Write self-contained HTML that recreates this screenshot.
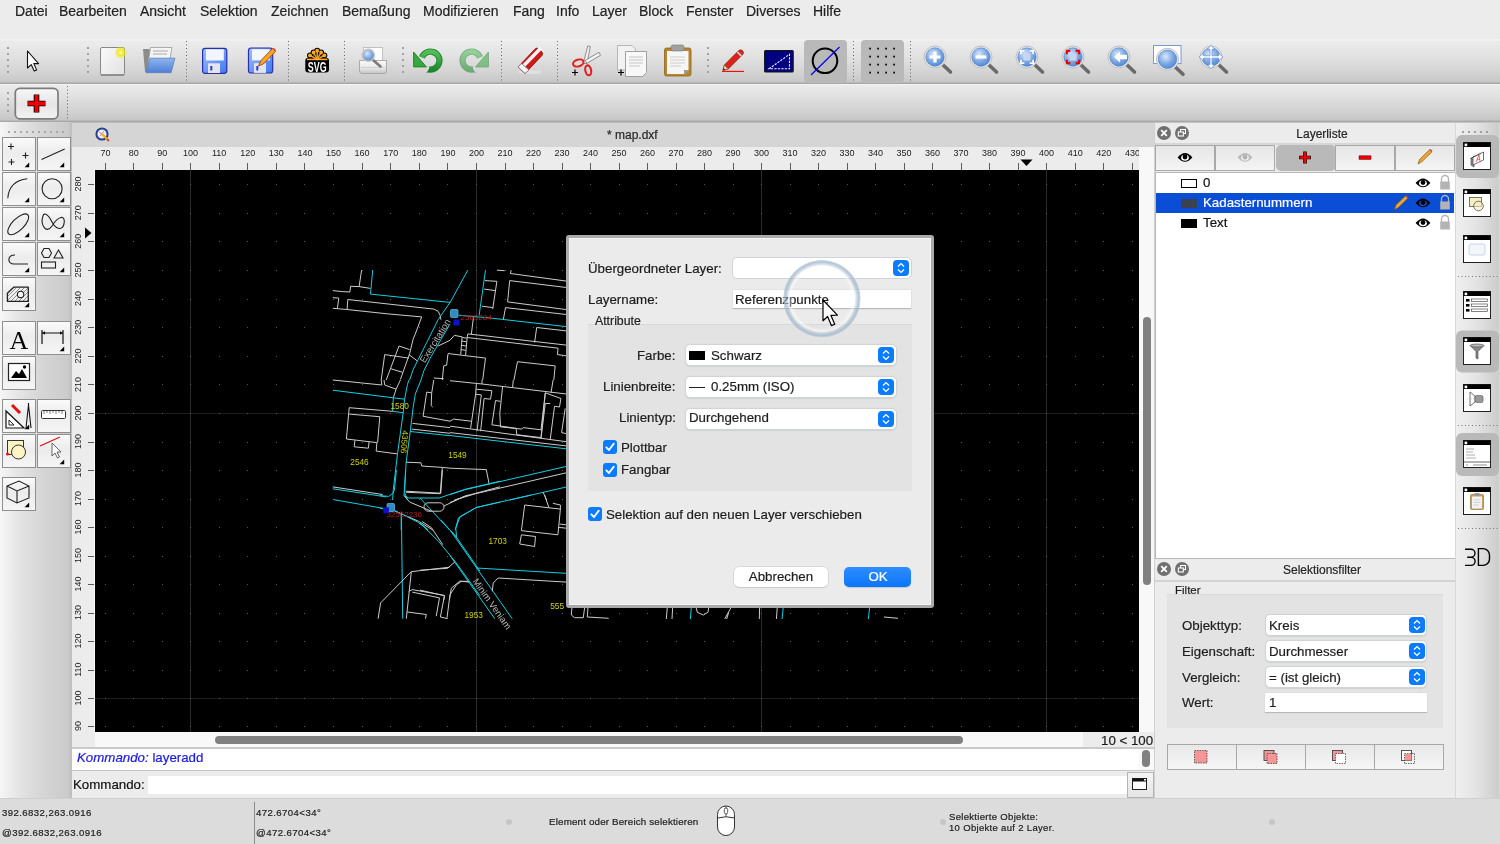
<!DOCTYPE html>
<html><head><meta charset="utf-8">
<style>
*{box-sizing:border-box;margin:0;padding:0}
html,body{width:1500px;height:844px;overflow:hidden;background:#ececec;font-family:"Liberation Sans",sans-serif;color:#1e1e1e}
.a{position:absolute}
.t{position:absolute;white-space:nowrap;line-height:1;-webkit-text-stroke:.2px currentColor}
body>*{will-change:transform}
#menu{left:0;top:0;width:1500px;height:39px;background:#ececec}
#menu .t{font-size:14px;top:4px;color:#222}
#tb1{left:0;top:39px;width:1500px;height:45px;background:linear-gradient(#f4f4f4 0,#ececec 5%,#e3e3e3 35%,#d3d3d3 75%,#c8c8c8 95%,#a9a9a9 97.8%,#a9a9a9 100%)}
#tb2{left:0;top:84px;width:1500px;height:38px;background:linear-gradient(#f4f4f4 0,#eaeaea 5%,#e0e0e0 35%,#d0d0d0 75%,#c6c6c6 95%,#a9a9a9 97.4%,#a9a9a9 100%)}
.hdl{position:absolute;width:2px;background-image:linear-gradient(#9a9a9a 50%,transparent 50%);background-size:2px 6px}
.sep{position:absolute;width:1px;background-image:linear-gradient(#555 50%,transparent 50%);background-size:1px 3px}
#pal{left:0;top:122px;width:72px;height:677px;background:linear-gradient(90deg,#f6f6f6 0,#e3e3e3 28%,#d7d7d7 55%,#cbcbcb 94%,#bdbdbd 100%)}
.tbtn{position:absolute;width:34px;height:34px;border:1px solid #9b9b9b;background:linear-gradient(#f7f7f7,#e9e9e9 50%,#f3f3f3)}
#title{left:72px;top:122px;width:1083px;height:25px;background:#d5d5d5;border-top:1px solid #bdbdbd}
#hrul{left:72px;top:147px;width:1083px;height:23px;background:#ececec}
#vrul{left:72px;top:170px;width:23px;height:562px;background:#ececec}
#canvas{left:95px;top:170px;width:1044px;height:562px;background:#000;overflow:hidden}
</style></head><body>
<div id="menu" class="a">
<span class="t" style="left:15px">Datei</span>
<span class="t" style="left:59px">Bearbeiten</span>
<span class="t" style="left:140px">Ansicht</span>
<span class="t" style="left:200px">Selektion</span>
<span class="t" style="left:271px">Zeichnen</span>
<span class="t" style="left:342px">Bemaßung</span>
<span class="t" style="left:423px">Modifizieren</span>
<span class="t" style="left:513px">Fang</span>
<span class="t" style="left:556px">Info</span>
<span class="t" style="left:592px">Layer</span>
<span class="t" style="left:639px">Block</span>
<span class="t" style="left:686px">Fenster</span>
<span class="t" style="left:746px">Diverses</span>
<span class="t" style="left:813px">Hilfe</span>
</div>
<div id="tb1" class="a"></div>
<div id="tb2" class="a"></div>
<div id="pal" class="a"></div>
<div id="title" class="a"></div>
<div id="hrul" class="a"></div>
<div id="vrul" class="a"></div>
<div id="canvas" class="a"></div>
<svg class="a" style="left:95px;top:170px" width="1044" height="562" viewBox="95 170 1044 562">
<rect x="190" y="170" width="1" height="562" fill="#2a2a2a"/>
<rect x="476" y="170" width="1" height="562" fill="#2a2a2a"/>
<rect x="761" y="170" width="1" height="562" fill="#2a2a2a"/>
<rect x="1046" y="170" width="1" height="562" fill="#2a2a2a"/>
<rect x="95" y="413" width="1044" height="1" fill="#1c1c1c"/>
<rect x="95" y="698" width="1044" height="1" fill="#1c1c1c"/>
<g fill="#5a5a5a"><rect x="105" y="184" width="1" height="1"/><rect x="105" y="213" width="1" height="1"/><rect x="105" y="241" width="1" height="1"/><rect x="105" y="270" width="1" height="1"/><rect x="105" y="299" width="1" height="1"/><rect x="105" y="327" width="1" height="1"/><rect x="105" y="356" width="1" height="1"/><rect x="105" y="384" width="1" height="1"/><rect x="105" y="413" width="1" height="1"/><rect x="105" y="442" width="1" height="1"/><rect x="105" y="470" width="1" height="1"/><rect x="105" y="499" width="1" height="1"/><rect x="105" y="527" width="1" height="1"/><rect x="105" y="556" width="1" height="1"/><rect x="105" y="584" width="1" height="1"/><rect x="105" y="613" width="1" height="1"/><rect x="105" y="641" width="1" height="1"/><rect x="105" y="670" width="1" height="1"/><rect x="105" y="698" width="1" height="1"/><rect x="105" y="726" width="1" height="1"/><rect x="133" y="184" width="1" height="1"/><rect x="133" y="213" width="1" height="1"/><rect x="133" y="241" width="1" height="1"/><rect x="133" y="270" width="1" height="1"/><rect x="133" y="299" width="1" height="1"/><rect x="133" y="327" width="1" height="1"/><rect x="133" y="356" width="1" height="1"/><rect x="133" y="384" width="1" height="1"/><rect x="133" y="413" width="1" height="1"/><rect x="133" y="442" width="1" height="1"/><rect x="133" y="470" width="1" height="1"/><rect x="133" y="499" width="1" height="1"/><rect x="133" y="527" width="1" height="1"/><rect x="133" y="556" width="1" height="1"/><rect x="133" y="584" width="1" height="1"/><rect x="133" y="613" width="1" height="1"/><rect x="133" y="641" width="1" height="1"/><rect x="133" y="670" width="1" height="1"/><rect x="133" y="698" width="1" height="1"/><rect x="133" y="726" width="1" height="1"/><rect x="162" y="184" width="1" height="1"/><rect x="162" y="213" width="1" height="1"/><rect x="162" y="241" width="1" height="1"/><rect x="162" y="270" width="1" height="1"/><rect x="162" y="299" width="1" height="1"/><rect x="162" y="327" width="1" height="1"/><rect x="162" y="356" width="1" height="1"/><rect x="162" y="384" width="1" height="1"/><rect x="162" y="413" width="1" height="1"/><rect x="162" y="442" width="1" height="1"/><rect x="162" y="470" width="1" height="1"/><rect x="162" y="499" width="1" height="1"/><rect x="162" y="527" width="1" height="1"/><rect x="162" y="556" width="1" height="1"/><rect x="162" y="584" width="1" height="1"/><rect x="162" y="613" width="1" height="1"/><rect x="162" y="641" width="1" height="1"/><rect x="162" y="670" width="1" height="1"/><rect x="162" y="698" width="1" height="1"/><rect x="162" y="726" width="1" height="1"/><rect x="190" y="184" width="1" height="1"/><rect x="190" y="213" width="1" height="1"/><rect x="190" y="241" width="1" height="1"/><rect x="190" y="270" width="1" height="1"/><rect x="190" y="299" width="1" height="1"/><rect x="190" y="327" width="1" height="1"/><rect x="190" y="356" width="1" height="1"/><rect x="190" y="384" width="1" height="1"/><rect x="190" y="413" width="1" height="1"/><rect x="190" y="442" width="1" height="1"/><rect x="190" y="470" width="1" height="1"/><rect x="190" y="499" width="1" height="1"/><rect x="190" y="527" width="1" height="1"/><rect x="190" y="556" width="1" height="1"/><rect x="190" y="584" width="1" height="1"/><rect x="190" y="613" width="1" height="1"/><rect x="190" y="641" width="1" height="1"/><rect x="190" y="670" width="1" height="1"/><rect x="190" y="698" width="1" height="1"/><rect x="190" y="726" width="1" height="1"/><rect x="219" y="184" width="1" height="1"/><rect x="219" y="213" width="1" height="1"/><rect x="219" y="241" width="1" height="1"/><rect x="219" y="270" width="1" height="1"/><rect x="219" y="299" width="1" height="1"/><rect x="219" y="327" width="1" height="1"/><rect x="219" y="356" width="1" height="1"/><rect x="219" y="384" width="1" height="1"/><rect x="219" y="413" width="1" height="1"/><rect x="219" y="442" width="1" height="1"/><rect x="219" y="470" width="1" height="1"/><rect x="219" y="499" width="1" height="1"/><rect x="219" y="527" width="1" height="1"/><rect x="219" y="556" width="1" height="1"/><rect x="219" y="584" width="1" height="1"/><rect x="219" y="613" width="1" height="1"/><rect x="219" y="641" width="1" height="1"/><rect x="219" y="670" width="1" height="1"/><rect x="219" y="698" width="1" height="1"/><rect x="219" y="726" width="1" height="1"/><rect x="247" y="184" width="1" height="1"/><rect x="247" y="213" width="1" height="1"/><rect x="247" y="241" width="1" height="1"/><rect x="247" y="270" width="1" height="1"/><rect x="247" y="299" width="1" height="1"/><rect x="247" y="327" width="1" height="1"/><rect x="247" y="356" width="1" height="1"/><rect x="247" y="384" width="1" height="1"/><rect x="247" y="413" width="1" height="1"/><rect x="247" y="442" width="1" height="1"/><rect x="247" y="470" width="1" height="1"/><rect x="247" y="499" width="1" height="1"/><rect x="247" y="527" width="1" height="1"/><rect x="247" y="556" width="1" height="1"/><rect x="247" y="584" width="1" height="1"/><rect x="247" y="613" width="1" height="1"/><rect x="247" y="641" width="1" height="1"/><rect x="247" y="670" width="1" height="1"/><rect x="247" y="698" width="1" height="1"/><rect x="247" y="726" width="1" height="1"/><rect x="276" y="184" width="1" height="1"/><rect x="276" y="213" width="1" height="1"/><rect x="276" y="241" width="1" height="1"/><rect x="276" y="270" width="1" height="1"/><rect x="276" y="299" width="1" height="1"/><rect x="276" y="327" width="1" height="1"/><rect x="276" y="356" width="1" height="1"/><rect x="276" y="384" width="1" height="1"/><rect x="276" y="413" width="1" height="1"/><rect x="276" y="442" width="1" height="1"/><rect x="276" y="470" width="1" height="1"/><rect x="276" y="499" width="1" height="1"/><rect x="276" y="527" width="1" height="1"/><rect x="276" y="556" width="1" height="1"/><rect x="276" y="584" width="1" height="1"/><rect x="276" y="613" width="1" height="1"/><rect x="276" y="641" width="1" height="1"/><rect x="276" y="670" width="1" height="1"/><rect x="276" y="698" width="1" height="1"/><rect x="276" y="726" width="1" height="1"/><rect x="304" y="184" width="1" height="1"/><rect x="304" y="213" width="1" height="1"/><rect x="304" y="241" width="1" height="1"/><rect x="304" y="270" width="1" height="1"/><rect x="304" y="299" width="1" height="1"/><rect x="304" y="327" width="1" height="1"/><rect x="304" y="356" width="1" height="1"/><rect x="304" y="384" width="1" height="1"/><rect x="304" y="413" width="1" height="1"/><rect x="304" y="442" width="1" height="1"/><rect x="304" y="470" width="1" height="1"/><rect x="304" y="499" width="1" height="1"/><rect x="304" y="527" width="1" height="1"/><rect x="304" y="556" width="1" height="1"/><rect x="304" y="584" width="1" height="1"/><rect x="304" y="613" width="1" height="1"/><rect x="304" y="641" width="1" height="1"/><rect x="304" y="670" width="1" height="1"/><rect x="304" y="698" width="1" height="1"/><rect x="304" y="726" width="1" height="1"/><rect x="333" y="184" width="1" height="1"/><rect x="333" y="213" width="1" height="1"/><rect x="333" y="241" width="1" height="1"/><rect x="333" y="270" width="1" height="1"/><rect x="333" y="299" width="1" height="1"/><rect x="333" y="327" width="1" height="1"/><rect x="333" y="356" width="1" height="1"/><rect x="333" y="384" width="1" height="1"/><rect x="333" y="413" width="1" height="1"/><rect x="333" y="442" width="1" height="1"/><rect x="333" y="470" width="1" height="1"/><rect x="333" y="499" width="1" height="1"/><rect x="333" y="527" width="1" height="1"/><rect x="333" y="556" width="1" height="1"/><rect x="333" y="584" width="1" height="1"/><rect x="333" y="613" width="1" height="1"/><rect x="333" y="641" width="1" height="1"/><rect x="333" y="670" width="1" height="1"/><rect x="333" y="698" width="1" height="1"/><rect x="333" y="726" width="1" height="1"/><rect x="362" y="184" width="1" height="1"/><rect x="362" y="213" width="1" height="1"/><rect x="362" y="241" width="1" height="1"/><rect x="362" y="270" width="1" height="1"/><rect x="362" y="299" width="1" height="1"/><rect x="362" y="327" width="1" height="1"/><rect x="362" y="356" width="1" height="1"/><rect x="362" y="384" width="1" height="1"/><rect x="362" y="413" width="1" height="1"/><rect x="362" y="442" width="1" height="1"/><rect x="362" y="470" width="1" height="1"/><rect x="362" y="499" width="1" height="1"/><rect x="362" y="527" width="1" height="1"/><rect x="362" y="556" width="1" height="1"/><rect x="362" y="584" width="1" height="1"/><rect x="362" y="613" width="1" height="1"/><rect x="362" y="641" width="1" height="1"/><rect x="362" y="670" width="1" height="1"/><rect x="362" y="698" width="1" height="1"/><rect x="362" y="726" width="1" height="1"/><rect x="390" y="184" width="1" height="1"/><rect x="390" y="213" width="1" height="1"/><rect x="390" y="241" width="1" height="1"/><rect x="390" y="270" width="1" height="1"/><rect x="390" y="299" width="1" height="1"/><rect x="390" y="327" width="1" height="1"/><rect x="390" y="356" width="1" height="1"/><rect x="390" y="384" width="1" height="1"/><rect x="390" y="413" width="1" height="1"/><rect x="390" y="442" width="1" height="1"/><rect x="390" y="470" width="1" height="1"/><rect x="390" y="499" width="1" height="1"/><rect x="390" y="527" width="1" height="1"/><rect x="390" y="556" width="1" height="1"/><rect x="390" y="584" width="1" height="1"/><rect x="390" y="613" width="1" height="1"/><rect x="390" y="641" width="1" height="1"/><rect x="390" y="670" width="1" height="1"/><rect x="390" y="698" width="1" height="1"/><rect x="390" y="726" width="1" height="1"/><rect x="419" y="184" width="1" height="1"/><rect x="419" y="213" width="1" height="1"/><rect x="419" y="241" width="1" height="1"/><rect x="419" y="270" width="1" height="1"/><rect x="419" y="299" width="1" height="1"/><rect x="419" y="327" width="1" height="1"/><rect x="419" y="356" width="1" height="1"/><rect x="419" y="384" width="1" height="1"/><rect x="419" y="413" width="1" height="1"/><rect x="419" y="442" width="1" height="1"/><rect x="419" y="470" width="1" height="1"/><rect x="419" y="499" width="1" height="1"/><rect x="419" y="527" width="1" height="1"/><rect x="419" y="556" width="1" height="1"/><rect x="419" y="584" width="1" height="1"/><rect x="419" y="613" width="1" height="1"/><rect x="419" y="641" width="1" height="1"/><rect x="419" y="670" width="1" height="1"/><rect x="419" y="698" width="1" height="1"/><rect x="419" y="726" width="1" height="1"/><rect x="447" y="184" width="1" height="1"/><rect x="447" y="213" width="1" height="1"/><rect x="447" y="241" width="1" height="1"/><rect x="447" y="270" width="1" height="1"/><rect x="447" y="299" width="1" height="1"/><rect x="447" y="327" width="1" height="1"/><rect x="447" y="356" width="1" height="1"/><rect x="447" y="384" width="1" height="1"/><rect x="447" y="413" width="1" height="1"/><rect x="447" y="442" width="1" height="1"/><rect x="447" y="470" width="1" height="1"/><rect x="447" y="499" width="1" height="1"/><rect x="447" y="527" width="1" height="1"/><rect x="447" y="556" width="1" height="1"/><rect x="447" y="584" width="1" height="1"/><rect x="447" y="613" width="1" height="1"/><rect x="447" y="641" width="1" height="1"/><rect x="447" y="670" width="1" height="1"/><rect x="447" y="698" width="1" height="1"/><rect x="447" y="726" width="1" height="1"/><rect x="476" y="184" width="1" height="1"/><rect x="476" y="213" width="1" height="1"/><rect x="476" y="241" width="1" height="1"/><rect x="476" y="270" width="1" height="1"/><rect x="476" y="299" width="1" height="1"/><rect x="476" y="327" width="1" height="1"/><rect x="476" y="356" width="1" height="1"/><rect x="476" y="384" width="1" height="1"/><rect x="476" y="413" width="1" height="1"/><rect x="476" y="442" width="1" height="1"/><rect x="476" y="470" width="1" height="1"/><rect x="476" y="499" width="1" height="1"/><rect x="476" y="527" width="1" height="1"/><rect x="476" y="556" width="1" height="1"/><rect x="476" y="584" width="1" height="1"/><rect x="476" y="613" width="1" height="1"/><rect x="476" y="641" width="1" height="1"/><rect x="476" y="670" width="1" height="1"/><rect x="476" y="698" width="1" height="1"/><rect x="476" y="726" width="1" height="1"/><rect x="505" y="184" width="1" height="1"/><rect x="505" y="213" width="1" height="1"/><rect x="505" y="241" width="1" height="1"/><rect x="505" y="270" width="1" height="1"/><rect x="505" y="299" width="1" height="1"/><rect x="505" y="327" width="1" height="1"/><rect x="505" y="356" width="1" height="1"/><rect x="505" y="384" width="1" height="1"/><rect x="505" y="413" width="1" height="1"/><rect x="505" y="442" width="1" height="1"/><rect x="505" y="470" width="1" height="1"/><rect x="505" y="499" width="1" height="1"/><rect x="505" y="527" width="1" height="1"/><rect x="505" y="556" width="1" height="1"/><rect x="505" y="584" width="1" height="1"/><rect x="505" y="613" width="1" height="1"/><rect x="505" y="641" width="1" height="1"/><rect x="505" y="670" width="1" height="1"/><rect x="505" y="698" width="1" height="1"/><rect x="505" y="726" width="1" height="1"/><rect x="533" y="184" width="1" height="1"/><rect x="533" y="213" width="1" height="1"/><rect x="533" y="241" width="1" height="1"/><rect x="533" y="270" width="1" height="1"/><rect x="533" y="299" width="1" height="1"/><rect x="533" y="327" width="1" height="1"/><rect x="533" y="356" width="1" height="1"/><rect x="533" y="384" width="1" height="1"/><rect x="533" y="413" width="1" height="1"/><rect x="533" y="442" width="1" height="1"/><rect x="533" y="470" width="1" height="1"/><rect x="533" y="499" width="1" height="1"/><rect x="533" y="527" width="1" height="1"/><rect x="533" y="556" width="1" height="1"/><rect x="533" y="584" width="1" height="1"/><rect x="533" y="613" width="1" height="1"/><rect x="533" y="641" width="1" height="1"/><rect x="533" y="670" width="1" height="1"/><rect x="533" y="698" width="1" height="1"/><rect x="533" y="726" width="1" height="1"/><rect x="562" y="184" width="1" height="1"/><rect x="562" y="213" width="1" height="1"/><rect x="562" y="241" width="1" height="1"/><rect x="562" y="270" width="1" height="1"/><rect x="562" y="299" width="1" height="1"/><rect x="562" y="327" width="1" height="1"/><rect x="562" y="356" width="1" height="1"/><rect x="562" y="384" width="1" height="1"/><rect x="562" y="413" width="1" height="1"/><rect x="562" y="442" width="1" height="1"/><rect x="562" y="470" width="1" height="1"/><rect x="562" y="499" width="1" height="1"/><rect x="562" y="527" width="1" height="1"/><rect x="562" y="556" width="1" height="1"/><rect x="562" y="584" width="1" height="1"/><rect x="562" y="613" width="1" height="1"/><rect x="562" y="641" width="1" height="1"/><rect x="562" y="670" width="1" height="1"/><rect x="562" y="698" width="1" height="1"/><rect x="562" y="726" width="1" height="1"/><rect x="590" y="184" width="1" height="1"/><rect x="590" y="213" width="1" height="1"/><rect x="590" y="241" width="1" height="1"/><rect x="590" y="270" width="1" height="1"/><rect x="590" y="299" width="1" height="1"/><rect x="590" y="327" width="1" height="1"/><rect x="590" y="356" width="1" height="1"/><rect x="590" y="384" width="1" height="1"/><rect x="590" y="413" width="1" height="1"/><rect x="590" y="442" width="1" height="1"/><rect x="590" y="470" width="1" height="1"/><rect x="590" y="499" width="1" height="1"/><rect x="590" y="527" width="1" height="1"/><rect x="590" y="556" width="1" height="1"/><rect x="590" y="584" width="1" height="1"/><rect x="590" y="613" width="1" height="1"/><rect x="590" y="641" width="1" height="1"/><rect x="590" y="670" width="1" height="1"/><rect x="590" y="698" width="1" height="1"/><rect x="590" y="726" width="1" height="1"/><rect x="619" y="184" width="1" height="1"/><rect x="619" y="213" width="1" height="1"/><rect x="619" y="241" width="1" height="1"/><rect x="619" y="270" width="1" height="1"/><rect x="619" y="299" width="1" height="1"/><rect x="619" y="327" width="1" height="1"/><rect x="619" y="356" width="1" height="1"/><rect x="619" y="384" width="1" height="1"/><rect x="619" y="413" width="1" height="1"/><rect x="619" y="442" width="1" height="1"/><rect x="619" y="470" width="1" height="1"/><rect x="619" y="499" width="1" height="1"/><rect x="619" y="527" width="1" height="1"/><rect x="619" y="556" width="1" height="1"/><rect x="619" y="584" width="1" height="1"/><rect x="619" y="613" width="1" height="1"/><rect x="619" y="641" width="1" height="1"/><rect x="619" y="670" width="1" height="1"/><rect x="619" y="698" width="1" height="1"/><rect x="619" y="726" width="1" height="1"/><rect x="647" y="184" width="1" height="1"/><rect x="647" y="213" width="1" height="1"/><rect x="647" y="241" width="1" height="1"/><rect x="647" y="270" width="1" height="1"/><rect x="647" y="299" width="1" height="1"/><rect x="647" y="327" width="1" height="1"/><rect x="647" y="356" width="1" height="1"/><rect x="647" y="384" width="1" height="1"/><rect x="647" y="413" width="1" height="1"/><rect x="647" y="442" width="1" height="1"/><rect x="647" y="470" width="1" height="1"/><rect x="647" y="499" width="1" height="1"/><rect x="647" y="527" width="1" height="1"/><rect x="647" y="556" width="1" height="1"/><rect x="647" y="584" width="1" height="1"/><rect x="647" y="613" width="1" height="1"/><rect x="647" y="641" width="1" height="1"/><rect x="647" y="670" width="1" height="1"/><rect x="647" y="698" width="1" height="1"/><rect x="647" y="726" width="1" height="1"/><rect x="676" y="184" width="1" height="1"/><rect x="676" y="213" width="1" height="1"/><rect x="676" y="241" width="1" height="1"/><rect x="676" y="270" width="1" height="1"/><rect x="676" y="299" width="1" height="1"/><rect x="676" y="327" width="1" height="1"/><rect x="676" y="356" width="1" height="1"/><rect x="676" y="384" width="1" height="1"/><rect x="676" y="413" width="1" height="1"/><rect x="676" y="442" width="1" height="1"/><rect x="676" y="470" width="1" height="1"/><rect x="676" y="499" width="1" height="1"/><rect x="676" y="527" width="1" height="1"/><rect x="676" y="556" width="1" height="1"/><rect x="676" y="584" width="1" height="1"/><rect x="676" y="613" width="1" height="1"/><rect x="676" y="641" width="1" height="1"/><rect x="676" y="670" width="1" height="1"/><rect x="676" y="698" width="1" height="1"/><rect x="676" y="726" width="1" height="1"/><rect x="704" y="184" width="1" height="1"/><rect x="704" y="213" width="1" height="1"/><rect x="704" y="241" width="1" height="1"/><rect x="704" y="270" width="1" height="1"/><rect x="704" y="299" width="1" height="1"/><rect x="704" y="327" width="1" height="1"/><rect x="704" y="356" width="1" height="1"/><rect x="704" y="384" width="1" height="1"/><rect x="704" y="413" width="1" height="1"/><rect x="704" y="442" width="1" height="1"/><rect x="704" y="470" width="1" height="1"/><rect x="704" y="499" width="1" height="1"/><rect x="704" y="527" width="1" height="1"/><rect x="704" y="556" width="1" height="1"/><rect x="704" y="584" width="1" height="1"/><rect x="704" y="613" width="1" height="1"/><rect x="704" y="641" width="1" height="1"/><rect x="704" y="670" width="1" height="1"/><rect x="704" y="698" width="1" height="1"/><rect x="704" y="726" width="1" height="1"/><rect x="733" y="184" width="1" height="1"/><rect x="733" y="213" width="1" height="1"/><rect x="733" y="241" width="1" height="1"/><rect x="733" y="270" width="1" height="1"/><rect x="733" y="299" width="1" height="1"/><rect x="733" y="327" width="1" height="1"/><rect x="733" y="356" width="1" height="1"/><rect x="733" y="384" width="1" height="1"/><rect x="733" y="413" width="1" height="1"/><rect x="733" y="442" width="1" height="1"/><rect x="733" y="470" width="1" height="1"/><rect x="733" y="499" width="1" height="1"/><rect x="733" y="527" width="1" height="1"/><rect x="733" y="556" width="1" height="1"/><rect x="733" y="584" width="1" height="1"/><rect x="733" y="613" width="1" height="1"/><rect x="733" y="641" width="1" height="1"/><rect x="733" y="670" width="1" height="1"/><rect x="733" y="698" width="1" height="1"/><rect x="733" y="726" width="1" height="1"/><rect x="761" y="184" width="1" height="1"/><rect x="761" y="213" width="1" height="1"/><rect x="761" y="241" width="1" height="1"/><rect x="761" y="270" width="1" height="1"/><rect x="761" y="299" width="1" height="1"/><rect x="761" y="327" width="1" height="1"/><rect x="761" y="356" width="1" height="1"/><rect x="761" y="384" width="1" height="1"/><rect x="761" y="413" width="1" height="1"/><rect x="761" y="442" width="1" height="1"/><rect x="761" y="470" width="1" height="1"/><rect x="761" y="499" width="1" height="1"/><rect x="761" y="527" width="1" height="1"/><rect x="761" y="556" width="1" height="1"/><rect x="761" y="584" width="1" height="1"/><rect x="761" y="613" width="1" height="1"/><rect x="761" y="641" width="1" height="1"/><rect x="761" y="670" width="1" height="1"/><rect x="761" y="698" width="1" height="1"/><rect x="761" y="726" width="1" height="1"/><rect x="790" y="184" width="1" height="1"/><rect x="790" y="213" width="1" height="1"/><rect x="790" y="241" width="1" height="1"/><rect x="790" y="270" width="1" height="1"/><rect x="790" y="299" width="1" height="1"/><rect x="790" y="327" width="1" height="1"/><rect x="790" y="356" width="1" height="1"/><rect x="790" y="384" width="1" height="1"/><rect x="790" y="413" width="1" height="1"/><rect x="790" y="442" width="1" height="1"/><rect x="790" y="470" width="1" height="1"/><rect x="790" y="499" width="1" height="1"/><rect x="790" y="527" width="1" height="1"/><rect x="790" y="556" width="1" height="1"/><rect x="790" y="584" width="1" height="1"/><rect x="790" y="613" width="1" height="1"/><rect x="790" y="641" width="1" height="1"/><rect x="790" y="670" width="1" height="1"/><rect x="790" y="698" width="1" height="1"/><rect x="790" y="726" width="1" height="1"/><rect x="818" y="184" width="1" height="1"/><rect x="818" y="213" width="1" height="1"/><rect x="818" y="241" width="1" height="1"/><rect x="818" y="270" width="1" height="1"/><rect x="818" y="299" width="1" height="1"/><rect x="818" y="327" width="1" height="1"/><rect x="818" y="356" width="1" height="1"/><rect x="818" y="384" width="1" height="1"/><rect x="818" y="413" width="1" height="1"/><rect x="818" y="442" width="1" height="1"/><rect x="818" y="470" width="1" height="1"/><rect x="818" y="499" width="1" height="1"/><rect x="818" y="527" width="1" height="1"/><rect x="818" y="556" width="1" height="1"/><rect x="818" y="584" width="1" height="1"/><rect x="818" y="613" width="1" height="1"/><rect x="818" y="641" width="1" height="1"/><rect x="818" y="670" width="1" height="1"/><rect x="818" y="698" width="1" height="1"/><rect x="818" y="726" width="1" height="1"/><rect x="847" y="184" width="1" height="1"/><rect x="847" y="213" width="1" height="1"/><rect x="847" y="241" width="1" height="1"/><rect x="847" y="270" width="1" height="1"/><rect x="847" y="299" width="1" height="1"/><rect x="847" y="327" width="1" height="1"/><rect x="847" y="356" width="1" height="1"/><rect x="847" y="384" width="1" height="1"/><rect x="847" y="413" width="1" height="1"/><rect x="847" y="442" width="1" height="1"/><rect x="847" y="470" width="1" height="1"/><rect x="847" y="499" width="1" height="1"/><rect x="847" y="527" width="1" height="1"/><rect x="847" y="556" width="1" height="1"/><rect x="847" y="584" width="1" height="1"/><rect x="847" y="613" width="1" height="1"/><rect x="847" y="641" width="1" height="1"/><rect x="847" y="670" width="1" height="1"/><rect x="847" y="698" width="1" height="1"/><rect x="847" y="726" width="1" height="1"/><rect x="875" y="184" width="1" height="1"/><rect x="875" y="213" width="1" height="1"/><rect x="875" y="241" width="1" height="1"/><rect x="875" y="270" width="1" height="1"/><rect x="875" y="299" width="1" height="1"/><rect x="875" y="327" width="1" height="1"/><rect x="875" y="356" width="1" height="1"/><rect x="875" y="384" width="1" height="1"/><rect x="875" y="413" width="1" height="1"/><rect x="875" y="442" width="1" height="1"/><rect x="875" y="470" width="1" height="1"/><rect x="875" y="499" width="1" height="1"/><rect x="875" y="527" width="1" height="1"/><rect x="875" y="556" width="1" height="1"/><rect x="875" y="584" width="1" height="1"/><rect x="875" y="613" width="1" height="1"/><rect x="875" y="641" width="1" height="1"/><rect x="875" y="670" width="1" height="1"/><rect x="875" y="698" width="1" height="1"/><rect x="875" y="726" width="1" height="1"/><rect x="904" y="184" width="1" height="1"/><rect x="904" y="213" width="1" height="1"/><rect x="904" y="241" width="1" height="1"/><rect x="904" y="270" width="1" height="1"/><rect x="904" y="299" width="1" height="1"/><rect x="904" y="327" width="1" height="1"/><rect x="904" y="356" width="1" height="1"/><rect x="904" y="384" width="1" height="1"/><rect x="904" y="413" width="1" height="1"/><rect x="904" y="442" width="1" height="1"/><rect x="904" y="470" width="1" height="1"/><rect x="904" y="499" width="1" height="1"/><rect x="904" y="527" width="1" height="1"/><rect x="904" y="556" width="1" height="1"/><rect x="904" y="584" width="1" height="1"/><rect x="904" y="613" width="1" height="1"/><rect x="904" y="641" width="1" height="1"/><rect x="904" y="670" width="1" height="1"/><rect x="904" y="698" width="1" height="1"/><rect x="904" y="726" width="1" height="1"/><rect x="932" y="184" width="1" height="1"/><rect x="932" y="213" width="1" height="1"/><rect x="932" y="241" width="1" height="1"/><rect x="932" y="270" width="1" height="1"/><rect x="932" y="299" width="1" height="1"/><rect x="932" y="327" width="1" height="1"/><rect x="932" y="356" width="1" height="1"/><rect x="932" y="384" width="1" height="1"/><rect x="932" y="413" width="1" height="1"/><rect x="932" y="442" width="1" height="1"/><rect x="932" y="470" width="1" height="1"/><rect x="932" y="499" width="1" height="1"/><rect x="932" y="527" width="1" height="1"/><rect x="932" y="556" width="1" height="1"/><rect x="932" y="584" width="1" height="1"/><rect x="932" y="613" width="1" height="1"/><rect x="932" y="641" width="1" height="1"/><rect x="932" y="670" width="1" height="1"/><rect x="932" y="698" width="1" height="1"/><rect x="932" y="726" width="1" height="1"/><rect x="961" y="184" width="1" height="1"/><rect x="961" y="213" width="1" height="1"/><rect x="961" y="241" width="1" height="1"/><rect x="961" y="270" width="1" height="1"/><rect x="961" y="299" width="1" height="1"/><rect x="961" y="327" width="1" height="1"/><rect x="961" y="356" width="1" height="1"/><rect x="961" y="384" width="1" height="1"/><rect x="961" y="413" width="1" height="1"/><rect x="961" y="442" width="1" height="1"/><rect x="961" y="470" width="1" height="1"/><rect x="961" y="499" width="1" height="1"/><rect x="961" y="527" width="1" height="1"/><rect x="961" y="556" width="1" height="1"/><rect x="961" y="584" width="1" height="1"/><rect x="961" y="613" width="1" height="1"/><rect x="961" y="641" width="1" height="1"/><rect x="961" y="670" width="1" height="1"/><rect x="961" y="698" width="1" height="1"/><rect x="961" y="726" width="1" height="1"/><rect x="989" y="184" width="1" height="1"/><rect x="989" y="213" width="1" height="1"/><rect x="989" y="241" width="1" height="1"/><rect x="989" y="270" width="1" height="1"/><rect x="989" y="299" width="1" height="1"/><rect x="989" y="327" width="1" height="1"/><rect x="989" y="356" width="1" height="1"/><rect x="989" y="384" width="1" height="1"/><rect x="989" y="413" width="1" height="1"/><rect x="989" y="442" width="1" height="1"/><rect x="989" y="470" width="1" height="1"/><rect x="989" y="499" width="1" height="1"/><rect x="989" y="527" width="1" height="1"/><rect x="989" y="556" width="1" height="1"/><rect x="989" y="584" width="1" height="1"/><rect x="989" y="613" width="1" height="1"/><rect x="989" y="641" width="1" height="1"/><rect x="989" y="670" width="1" height="1"/><rect x="989" y="698" width="1" height="1"/><rect x="989" y="726" width="1" height="1"/><rect x="1018" y="184" width="1" height="1"/><rect x="1018" y="213" width="1" height="1"/><rect x="1018" y="241" width="1" height="1"/><rect x="1018" y="270" width="1" height="1"/><rect x="1018" y="299" width="1" height="1"/><rect x="1018" y="327" width="1" height="1"/><rect x="1018" y="356" width="1" height="1"/><rect x="1018" y="384" width="1" height="1"/><rect x="1018" y="413" width="1" height="1"/><rect x="1018" y="442" width="1" height="1"/><rect x="1018" y="470" width="1" height="1"/><rect x="1018" y="499" width="1" height="1"/><rect x="1018" y="527" width="1" height="1"/><rect x="1018" y="556" width="1" height="1"/><rect x="1018" y="584" width="1" height="1"/><rect x="1018" y="613" width="1" height="1"/><rect x="1018" y="641" width="1" height="1"/><rect x="1018" y="670" width="1" height="1"/><rect x="1018" y="698" width="1" height="1"/><rect x="1018" y="726" width="1" height="1"/><rect x="1046" y="184" width="1" height="1"/><rect x="1046" y="213" width="1" height="1"/><rect x="1046" y="241" width="1" height="1"/><rect x="1046" y="270" width="1" height="1"/><rect x="1046" y="299" width="1" height="1"/><rect x="1046" y="327" width="1" height="1"/><rect x="1046" y="356" width="1" height="1"/><rect x="1046" y="384" width="1" height="1"/><rect x="1046" y="413" width="1" height="1"/><rect x="1046" y="442" width="1" height="1"/><rect x="1046" y="470" width="1" height="1"/><rect x="1046" y="499" width="1" height="1"/><rect x="1046" y="527" width="1" height="1"/><rect x="1046" y="556" width="1" height="1"/><rect x="1046" y="584" width="1" height="1"/><rect x="1046" y="613" width="1" height="1"/><rect x="1046" y="641" width="1" height="1"/><rect x="1046" y="670" width="1" height="1"/><rect x="1046" y="698" width="1" height="1"/><rect x="1046" y="726" width="1" height="1"/><rect x="1075" y="184" width="1" height="1"/><rect x="1075" y="213" width="1" height="1"/><rect x="1075" y="241" width="1" height="1"/><rect x="1075" y="270" width="1" height="1"/><rect x="1075" y="299" width="1" height="1"/><rect x="1075" y="327" width="1" height="1"/><rect x="1075" y="356" width="1" height="1"/><rect x="1075" y="384" width="1" height="1"/><rect x="1075" y="413" width="1" height="1"/><rect x="1075" y="442" width="1" height="1"/><rect x="1075" y="470" width="1" height="1"/><rect x="1075" y="499" width="1" height="1"/><rect x="1075" y="527" width="1" height="1"/><rect x="1075" y="556" width="1" height="1"/><rect x="1075" y="584" width="1" height="1"/><rect x="1075" y="613" width="1" height="1"/><rect x="1075" y="641" width="1" height="1"/><rect x="1075" y="670" width="1" height="1"/><rect x="1075" y="698" width="1" height="1"/><rect x="1075" y="726" width="1" height="1"/><rect x="1103" y="184" width="1" height="1"/><rect x="1103" y="213" width="1" height="1"/><rect x="1103" y="241" width="1" height="1"/><rect x="1103" y="270" width="1" height="1"/><rect x="1103" y="299" width="1" height="1"/><rect x="1103" y="327" width="1" height="1"/><rect x="1103" y="356" width="1" height="1"/><rect x="1103" y="384" width="1" height="1"/><rect x="1103" y="413" width="1" height="1"/><rect x="1103" y="442" width="1" height="1"/><rect x="1103" y="470" width="1" height="1"/><rect x="1103" y="499" width="1" height="1"/><rect x="1103" y="527" width="1" height="1"/><rect x="1103" y="556" width="1" height="1"/><rect x="1103" y="584" width="1" height="1"/><rect x="1103" y="613" width="1" height="1"/><rect x="1103" y="641" width="1" height="1"/><rect x="1103" y="670" width="1" height="1"/><rect x="1103" y="698" width="1" height="1"/><rect x="1103" y="726" width="1" height="1"/><rect x="1132" y="184" width="1" height="1"/><rect x="1132" y="213" width="1" height="1"/><rect x="1132" y="241" width="1" height="1"/><rect x="1132" y="270" width="1" height="1"/><rect x="1132" y="299" width="1" height="1"/><rect x="1132" y="327" width="1" height="1"/><rect x="1132" y="356" width="1" height="1"/><rect x="1132" y="384" width="1" height="1"/><rect x="1132" y="413" width="1" height="1"/><rect x="1132" y="442" width="1" height="1"/><rect x="1132" y="470" width="1" height="1"/><rect x="1132" y="499" width="1" height="1"/><rect x="1132" y="527" width="1" height="1"/><rect x="1132" y="556" width="1" height="1"/><rect x="1132" y="584" width="1" height="1"/><rect x="1132" y="613" width="1" height="1"/><rect x="1132" y="641" width="1" height="1"/><rect x="1132" y="670" width="1" height="1"/><rect x="1132" y="698" width="1" height="1"/><rect x="1132" y="726" width="1" height="1"/></g>
<clipPath id="mclip"><rect x="95" y="170" width="1044" height="449"/></clipPath>
<g clip-path="url(#mclip)" fill="none" stroke-width="1" stroke-linejoin="round">
<path d="M332.8 290.6 L342.5 291.6 L349.9 292.0 L350.6 286.3 L359.1 286.6 L370.5 288.4" stroke="#cccccc"/>
<path d="M361.6 270.2 L359.1 286.6" stroke="#cccccc"/>
<path d="M332.8 297.7 L338.8 298.1 L337.4 308.3" stroke="#cccccc"/>
<path d="M332.8 308.3 L347.1 309.5 L389.0 314.0 L421.7 316.9" stroke="#cccccc"/>
<path d="M347.1 309.5 L347.8 299.5 L433.8 309.1 L438.1 311.2 L440.2 315.5 L440.9 319.7" stroke="#cccccc"/>
<path d="M421.7 316.9 L415.3 333.9 L413.2 338.9 L409.6 353.8 L400.4 379.4" stroke="#cccccc"/>
<path d="M399.0 346.0 L409.6 349.6" stroke="#cccccc"/>
<path d="M384.7 354.6 L408.9 358.1" stroke="#cccccc"/>
<path d="M391.1 368.8 L402.5 372.3" stroke="#cccccc"/>
<path d="M399.0 346.0 L386.2 380.0" stroke="#cccccc"/>
<path d="M384.7 354.6 L381.2 380.0" stroke="#cccccc"/>
<path d="M408.9 354.6 L417.4 361.0" stroke="#cccccc"/>
<path d="M450.0 340.3 L438.1 346.0" stroke="#cccccc"/>
<path d="M450.0 353.1 L448.0 353.8 L446.6 365.2 L443.7 365.9 L442.3 380.0" stroke="#cccccc"/>
<path d="M433.8 378.0 L443.7 378.7" stroke="#cccccc"/>
<path d="M372.7 270.0 L370.5 294.1 L450.0 302.4" stroke="#12d0e0"/>
<path d="M450.0 302.4 L438.1 319.7 L426.7 342.5 L418.2 359.5 L413.2 369.5 L409.6 380.0" stroke="#12d0e0"/>
<path d="M450.0 324.0 L440.9 339.6 L431.0 356.7 L423.8 370.9 L421.0 380.0" stroke="#12d0e0"/>
<path d="M496.9 270.2 L504.7 270.7" stroke="#cccccc"/>
<path d="M511.1 270.2 L510.4 273.5 L568.0 281.3" stroke="#cccccc"/>
<path d="M484.8 280.6 L496.9 281.3 L492.7 309.1" stroke="#cccccc"/>
<path d="M484.1 289.1 L495.5 290.6" stroke="#cccccc"/>
<path d="M482.0 306.2 L492.7 307.6" stroke="#cccccc"/>
<path d="M509.7 280.6 L568.0 287.7" stroke="#cccccc"/>
<path d="M509.7 280.6 L507.6 301.9 L568.0 309.8" stroke="#cccccc"/>
<path d="M505.5 307.6 L568.0 314.7" stroke="#cccccc"/>
<path d="M505.5 307.6 L503.3 319.7" stroke="#cccccc"/>
<path d="M473.5 316.9 L471.3 334.6" stroke="#cccccc"/>
<path d="M467.8 333.9 L568.0 345.3" stroke="#cccccc"/>
<path d="M467.8 333.9 L467.1 337.5 L558.1 348.2 L557.4 354.6 L568.0 356.0" stroke="#cccccc"/>
<path d="M536.7 327.5 L568.0 331.1" stroke="#cccccc"/>
<path d="M536.7 327.5 L534.6 342.5" stroke="#cccccc"/>
<path d="M450.0 340.3 L454.3 335.4 L462.1 336.8 L460.7 354.6" stroke="#cccccc"/>
<path d="M462.1 337.5 L467.1 338.2 L465.6 355.3" stroke="#cccccc"/>
<path d="M461.7 341.0 L466.4 341.8" stroke="#cccccc"/>
<path d="M461.4 345.3 L466.1 346.0" stroke="#cccccc"/>
<path d="M461.1 349.6 L465.8 350.3" stroke="#cccccc"/>
<path d="M450.0 353.8 L485.5 358.1 L482.7 380.0" stroke="#cccccc"/>
<path d="M517.5 361.7 L555.2 365.9 L553.8 380.0" stroke="#cccccc"/>
<path d="M517.5 361.7 L515.4 372.3 L514.0 380.0" stroke="#cccccc"/>
<path d="M467.8 270.2 L450.0 302.7" stroke="#12d0e0"/>
<path d="M485.5 270.2 L479.1 315.5" stroke="#12d0e0"/>
<path d="M458.5 315.2 L492.7 318.3 L568.0 326.8" stroke="#12d0e0"/>
<path d="M332.8 380.0 L381.9 385.0 L381.2 380.0" stroke="#cccccc"/>
<path d="M384.0 380.0 L384.7 385.0 L396.1 389.2 L400.4 380.0" stroke="#cccccc"/>
<path d="M396.1 389.2 L393.3 397.8" stroke="#cccccc"/>
<path d="M332.8 390.2 L393.3 397.8 L404.6 399.2" stroke="#12d0e0"/>
<path d="M393.3 397.8 L392.6 411.3 L403.2 412.7" stroke="#12d0e0"/>
<path d="M349.2 407.7 L392.6 411.3" stroke="#cccccc"/>
<path d="M349.2 407.7 L346.4 439.0 L376.9 442.6 L376.2 451.1 L397.5 453.9" stroke="#cccccc"/>
<path d="M349.2 414.1 L379.8 416.7 L377.6 442.6" stroke="#cccccc"/>
<path d="M354.9 440.4 L354.2 446.8 L368.4 448.2 L369.1 441.9" stroke="#cccccc"/>
<path d="M408.9 380.0 L407.5 384.3 L404.6 399.2 L403.2 412.7 L397.5 453.9 L393.3 489.5 L392.6 500.0" stroke="#12d0e0"/>
<path d="M421.0 380.0 L415.3 394.2 L413.2 407.0 L410.3 431.2 L406.1 462.5 L404.6 492.3 L407.5 500.0" stroke="#12d0e0"/>
<path d="M433.8 380.0 L431.7 392.8 L426.7 392.1 L423.1 416.3 L450.0 421.2" stroke="#cccccc"/>
<path d="M431.7 392.8 L431.2 405.6 L432.7 407.0" stroke="#cccccc"/>
<path d="M412.5 423.4 L450.0 427.6" stroke="#cccccc"/>
<path d="M411.8 429.1 L450.0 433.3" stroke="#cccccc"/>
<path d="M410.3 431.5 L450.0 435.7" stroke="#12d0e0"/>
<path d="M406.1 462.2 L421.0 462.8 L421.7 466.0 L442.3 467.4 L440.2 493.7 L406.1 492.3" stroke="#cccccc"/>
<path d="M442.3 467.4 L450.0 468.2" stroke="#cccccc"/>
<path d="M332.8 488.8 L386.2 496.9" stroke="#12d0e0"/>
<path d="M332.8 486.9 L382.6 494.5" stroke="#cccccc"/>
<path d="M450.0 380.7 L482.0 384.0 L568.0 394.2" stroke="#cccccc"/>
<path d="M482.0 380.0 L482.0 384.0" stroke="#cccccc"/>
<path d="M513.3 380.0 L512.6 387.1" stroke="#cccccc"/>
<path d="M553.1 380.0 L551.0 392.8" stroke="#cccccc"/>
<path d="M476.3 384.3 L475.6 394.2 L470.6 428.3" stroke="#cccccc"/>
<path d="M476.3 389.2 L491.9 390.7 L490.5 399.2 L484.1 398.5 L480.6 431.2" stroke="#cccccc"/>
<path d="M475.6 394.2 L481.3 394.9 L477.0 431.2" stroke="#cccccc"/>
<path d="M502.6 386.4 L499.8 413.4 L500.5 426.9 L521.8 429.1 L523.2 427.6 L541.0 429.8 L545.3 392.8" stroke="#cccccc"/>
<path d="M495.5 400.6 L500.5 401.3" stroke="#cccccc"/>
<path d="M495.5 400.6 L491.9 424.8 L516.1 428.3 L516.8 434.7 L541.0 437.6 L545.3 392.8" stroke="#cccccc"/>
<path d="M545.3 392.8 L560.9 398.5 L559.5 407.0 L554.5 406.3 L550.2 439.7" stroke="#cccccc"/>
<path d="M550.2 403.5 L545.3 403.5 L541.0 438.3" stroke="#cccccc"/>
<path d="M565.2 408.4 L561.6 432.6 L568.0 434.0" stroke="#cccccc"/>
<path d="M450.0 421.2 L453.6 419.1 L471.3 421.2" stroke="#cccccc"/>
<path d="M450.0 426.2 L477.0 429.8 L568.0 441.9" stroke="#cccccc"/>
<path d="M450.0 432.6 L568.0 446.1" stroke="#cccccc"/>
<path d="M450.0 435.5 L568.0 449.0" stroke="#12d0e0"/>
<path d="M450.0 494.5 L465.6 489.5 L568.0 466.0" stroke="#12d0e0"/>
<path d="M454.3 500.0 L475.6 493.7 L568.0 472.4" stroke="#cccccc"/>
<path d="M509.7 500.0 L568.0 486.6" stroke="#12d0e0"/>
<path d="M543.1 492.3 L546.7 500.0" stroke="#cccccc"/>
<path d="M450.0 468.2 L486.3 469.6 L489.1 483.8" stroke="#cccccc"/>
<path d="M333.3 499.6 L383.1 508.3" stroke="#12d0e0"/>
<path d="M401.4 511.6 L402.7 618.7" stroke="#12d0e0"/>
<path d="M378.1 618.7 L380.6 602.9 L411.3 571.7 L449.5 567.2" stroke="#cccccc"/>
<path d="M411.3 571.7 L406.3 618.7" stroke="#cccccc"/>
<path d="M408.8 591.3 L412.2 589.6 L444.5 595.4 L440.4 617.0 L447.8 618.7" stroke="#cccccc"/>
<path d="M412.2 592.1 L439.5 597.9 L436.2 616.2" stroke="#cccccc"/>
<path d="M407.2 612.0 L426.3 614.5 L425.4 618.7" stroke="#cccccc"/>
<path d="M450.0 594.6 L447.0 617.8" stroke="#cccccc"/>
<path d="M450.0 529.9 L476.6 568.0 L512.2 618.7" stroke="#12d0e0"/>
<path d="M450.0 555.6 L494.8 618.7" stroke="#12d0e0"/>
<path d="M476.6 568.0 L566.2 573.3" stroke="#12d0e0"/>
<path d="M531.3 495.0 L476.6 507.4 L460.0 516.6 L455.8 528.2 L456.6 537.3 L450.0 529.9" stroke="#12d0e0"/>
<path d="M450.0 502.5 L468.3 495.0" stroke="#cccccc"/>
<path d="M450.0 594.6 L456.6 584.6 L461.6 581.3 L468.3 581.3" stroke="#cccccc"/>
<path d="M492.3 591.3 L493.2 583.0 L498.1 578.0 L566.2 582.1" stroke="#cccccc"/>
<path d="M524.7 505.0 L560.4 509.1 L557.9 534.8 L521.4 530.7 L524.7 505.0" stroke="#cccccc"/>
<path d="M552.9 503.3 L560.4 505.0 L560.4 509.1" stroke="#cccccc"/>
<path d="M559.5 524.0 L566.2 524.9" stroke="#cccccc"/>
<path d="M558.7 527.4 L566.2 528.2" stroke="#cccccc"/>
<path d="M521.4 534.8 L535.5 536.5 L534.6 546.5 L519.7 544.0 L521.4 534.8" stroke="#cccccc"/>
<path d="M544.6 495.0 L548.8 507.4" stroke="#cccccc"/>
<path d="M396.4 470.0 L394.4 490.0 L392.8 493.2 L388.8 496.4 L380.0 495.6" stroke="#12d0e0"/>
<path d="M405.6 470.0 L404.0 495.6 L408.8 498.0 L439.2 498.0 L465.6 489.2 L500.0 481.2" stroke="#12d0e0"/>
<path d="M405.6 491.2 L440.8 493.2 L442.4 470.0" stroke="#cccccc"/>
<path d="M404.0 495.6 L409.6 502.0 L424.8 508.4 L431.2 511.2" stroke="#cccccc"/>
<path d="M444.0 506.0 L464.0 496.4 L500.0 486.8" stroke="#cccccc"/>
<path d="M420.0 498.0 L449.6 530.0" stroke="#12d0e0"/>
<path d="M455.2 530.0 L458.4 518.0 L476.0 507.6 L500.0 502.0" stroke="#12d0e0"/>
<path d="M394.4 510.8 L418.4 521.2 L432.8 530.0" stroke="#cccccc"/>
<path d="M395.2 510.8 L417.6 522.0 L428.0 530.0" stroke="#12d0e0"/>
<path d="M401.2 513.2 L401.2 530.0" stroke="#12d0e0"/>
<path d="M380.0 508.4 L383.2 508.8" stroke="#12d0e0"/>
<path d="M420.0 522.8 L439.0 541.8 L456.0 562.7 L480.0 595.8" stroke="#12d0e0"/>
<path d="M421.9 521.4 L431.4 527.6 L439.0 539.0 L442.7 544.6" stroke="#cccccc"/>
<path d="M420.0 570.2 L447.5 568.3 L455.1 561.7" stroke="#cccccc"/>
<path d="M440.9 520.0 L456.0 536.6 L480.0 571.2" stroke="#12d0e0"/>
<path d="M420.0 590.1 L444.6 595.8 L443.7 600.0" stroke="#cccccc"/>
<path d="M449.4 600.0 L451.3 588.2 L459.8 581.1 L469.3 582.1" stroke="#cccccc"/>
<path d="M428.0 530.0 L420.0 522.8" stroke="#12d0e0"/>
<path d="M572.0 607.0 L571.3 615.0 L574.7 617.7 L583.3 617.7 L584.7 607.0" stroke="#cccccc"/>
<path d="M588.0 607.0 L587.3 617.0 L608.7 618.3" stroke="#cccccc"/>
<path d="M667.3 607.0 L666.3 619.0" stroke="#cccccc"/>
<path d="M672.7 607.0 L672.0 619.0" stroke="#cccccc"/>
<path d="M691.3 607.0 L690.4 619.0" stroke="#12d0e0"/>
<path d="M696.0 607.0 L697.3 612.3 L703.3 615.0 L708.0 612.3 L708.7 607.0" stroke="#cccccc"/>
<path d="M731.3 607.0 L724.7 619.0" stroke="#cccccc"/>
<path d="M728.7 612.3 L726.7 619.0" stroke="#cccccc"/>
<path d="M759.6 607.0 L759.3 619.0" stroke="#cccccc"/>
<path d="M777.3 607.0 L776.4 619.0" stroke="#cccccc"/>
<path d="M783.3 607.0 L782.0 619.0" stroke="#12d0e0"/>
<path d="M869.6 607.0 L868.4 619.0" stroke="#12d0e0"/>
<path d="M884.0 617.0 L898.0 618.3" stroke="#cccccc"/>
<rect x="424" y="502.8" width="20" height="8.4" rx="4.2" stroke="#cccccc"/>
</g>
<g font-family="Liberation Sans" fill="#d2d200" font-size="8.3">
<text x="399.7" y="409" text-anchor="middle">1580</text>
<text x="359.5" y="465.2" text-anchor="middle">2546</text>
<text x="457.5" y="458.3" text-anchor="middle">1549</text>
<text x="497.7" y="544.2" text-anchor="middle">1703</text>
<text x="473.7" y="617.6" text-anchor="middle">1953</text>
<text x="557.1" y="608.9" text-anchor="middle">555</text>
<text x="0" y="3" text-anchor="middle" transform="translate(404.6,441.9) rotate(95)">43506</text>
</g>
<g font-family="Liberation Sans" fill="#b8b8b8" font-size="9.5">
<text x="0" y="3.5" text-anchor="middle" transform="translate(435,340.7) rotate(-58)">Exercitation</text>
<text x="0" y="3.5" text-anchor="middle" transform="translate(492.3,603.7) rotate(55)">Minim Veniam</text>
</g>
<g font-family="Liberation Sans" fill="#b02020" font-size="8">
<text x="460.5" y="320">2563284</text><text x="386.4" y="517">32562236</text>
</g>
<rect x="450.5" y="309.5" width="7.5" height="8" rx="1" fill="#2e8cc0" stroke="#5ab0d8" stroke-width=".8"/>
<rect x="453.5" y="319.5" width="6" height="6" fill="#1010c8"/>
<rect x="387" y="503.5" width="7.5" height="8" rx="1" fill="#2e8cc0" stroke="#5ab0d8" stroke-width=".8"/>
<rect x="383.3" y="507.3" width="5.6" height="6" fill="#1010c8"/>
</svg>
<svg class="a" style="left:72px;top:122px" width="1083" height="610" viewBox="72 122 1083 610">
<g fill="#222" font-family="Liberation Sans" font-size="9">
<text x="105.5" y="156" text-anchor="middle">70</text>
<text x="133.8" y="156" text-anchor="middle">80</text>
<text x="162.2" y="156" text-anchor="middle">90</text>
<text x="190.5" y="156" text-anchor="middle">100</text>
<text x="219.1" y="156" text-anchor="middle">110</text>
<text x="247.7" y="156" text-anchor="middle">120</text>
<text x="276.3" y="156" text-anchor="middle">130</text>
<text x="304.9" y="156" text-anchor="middle">140</text>
<text x="333.5" y="156" text-anchor="middle">150</text>
<text x="362.1" y="156" text-anchor="middle">160</text>
<text x="390.7" y="156" text-anchor="middle">170</text>
<text x="419.3" y="156" text-anchor="middle">180</text>
<text x="447.9" y="156" text-anchor="middle">190</text>
<text x="476.5" y="156" text-anchor="middle">200</text>
<text x="505.0" y="156" text-anchor="middle">210</text>
<text x="533.5" y="156" text-anchor="middle">220</text>
<text x="562.0" y="156" text-anchor="middle">230</text>
<text x="590.5" y="156" text-anchor="middle">240</text>
<text x="619.0" y="156" text-anchor="middle">250</text>
<text x="647.5" y="156" text-anchor="middle">260</text>
<text x="676.0" y="156" text-anchor="middle">270</text>
<text x="704.5" y="156" text-anchor="middle">280</text>
<text x="733.0" y="156" text-anchor="middle">290</text>
<text x="761.5" y="156" text-anchor="middle">300</text>
<text x="790.0" y="156" text-anchor="middle">310</text>
<text x="818.5" y="156" text-anchor="middle">320</text>
<text x="847.0" y="156" text-anchor="middle">330</text>
<text x="875.5" y="156" text-anchor="middle">340</text>
<text x="904.0" y="156" text-anchor="middle">350</text>
<text x="932.5" y="156" text-anchor="middle">360</text>
<text x="961.0" y="156" text-anchor="middle">370</text>
<text x="989.5" y="156" text-anchor="middle">380</text>
<text x="1018.0" y="156" text-anchor="middle">390</text>
<text x="1046.5" y="156" text-anchor="middle">400</text>
<text x="1075.2" y="156" text-anchor="middle">410</text>
<text x="1103.8" y="156" text-anchor="middle">420</text>
<text x="1132.5" y="156" text-anchor="middle">430</text>
<text x="0" y="0" text-anchor="middle" transform="translate(81.3,184.1) rotate(-90)">280</text>
<text x="0" y="0" text-anchor="middle" transform="translate(81.3,212.7) rotate(-90)">270</text>
<text x="0" y="0" text-anchor="middle" transform="translate(81.3,241.3) rotate(-90)">260</text>
<text x="0" y="0" text-anchor="middle" transform="translate(81.3,270.0) rotate(-90)">250</text>
<text x="0" y="0" text-anchor="middle" transform="translate(81.3,298.6) rotate(-90)">240</text>
<text x="0" y="0" text-anchor="middle" transform="translate(81.3,327.2) rotate(-90)">230</text>
<text x="0" y="0" text-anchor="middle" transform="translate(81.3,355.9) rotate(-90)">220</text>
<text x="0" y="0" text-anchor="middle" transform="translate(81.3,384.5) rotate(-90)">210</text>
<text x="0" y="0" text-anchor="middle" transform="translate(81.3,413.1) rotate(-90)">200</text>
<text x="0" y="0" text-anchor="middle" transform="translate(81.3,441.6) rotate(-90)">190</text>
<text x="0" y="0" text-anchor="middle" transform="translate(81.3,470.1) rotate(-90)">180</text>
<text x="0" y="0" text-anchor="middle" transform="translate(81.3,498.6) rotate(-90)">170</text>
<text x="0" y="0" text-anchor="middle" transform="translate(81.3,527.1) rotate(-90)">160</text>
<text x="0" y="0" text-anchor="middle" transform="translate(81.3,555.6) rotate(-90)">150</text>
<text x="0" y="0" text-anchor="middle" transform="translate(81.3,584.1) rotate(-90)">140</text>
<text x="0" y="0" text-anchor="middle" transform="translate(81.3,612.6) rotate(-90)">130</text>
<text x="0" y="0" text-anchor="middle" transform="translate(81.3,641.1) rotate(-90)">120</text>
<text x="0" y="0" text-anchor="middle" transform="translate(81.3,669.6) rotate(-90)">110</text>
<text x="0" y="0" text-anchor="middle" transform="translate(81.3,698.1) rotate(-90)">100</text>
<text x="0" y="0" text-anchor="middle" transform="translate(81.3,726.1) rotate(-90)">90</text>
</g><g fill="#5c5c5c">
<rect x="105" y="163" width="1" height="7"/>
<rect x="133" y="163" width="1" height="7"/>
<rect x="162" y="163" width="1" height="7"/>
<rect x="190" y="163" width="1" height="7"/>
<rect x="219" y="163" width="1" height="7"/>
<rect x="247" y="163" width="1" height="7"/>
<rect x="276" y="163" width="1" height="7"/>
<rect x="304" y="163" width="1" height="7"/>
<rect x="333" y="163" width="1" height="7"/>
<rect x="362" y="163" width="1" height="7"/>
<rect x="390" y="163" width="1" height="7"/>
<rect x="419" y="163" width="1" height="7"/>
<rect x="447" y="163" width="1" height="7"/>
<rect x="476" y="163" width="1" height="7"/>
<rect x="505" y="163" width="1" height="7"/>
<rect x="533" y="163" width="1" height="7"/>
<rect x="562" y="163" width="1" height="7"/>
<rect x="590" y="163" width="1" height="7"/>
<rect x="619" y="163" width="1" height="7"/>
<rect x="647" y="163" width="1" height="7"/>
<rect x="676" y="163" width="1" height="7"/>
<rect x="704" y="163" width="1" height="7"/>
<rect x="733" y="163" width="1" height="7"/>
<rect x="761" y="163" width="1" height="7"/>
<rect x="790" y="163" width="1" height="7"/>
<rect x="818" y="163" width="1" height="7"/>
<rect x="847" y="163" width="1" height="7"/>
<rect x="875" y="163" width="1" height="7"/>
<rect x="904" y="163" width="1" height="7"/>
<rect x="932" y="163" width="1" height="7"/>
<rect x="961" y="163" width="1" height="7"/>
<rect x="989" y="163" width="1" height="7"/>
<rect x="1018" y="163" width="1" height="7"/>
<rect x="1046" y="163" width="1" height="7"/>
<rect x="1075" y="163" width="1" height="7"/>
<rect x="1103" y="163" width="1" height="7"/>
<rect x="1132" y="163" width="1" height="7"/>
<rect x="88" y="184" width="7" height="1"/>
<rect x="88" y="213" width="7" height="1"/>
<rect x="88" y="241" width="7" height="1"/>
<rect x="88" y="270" width="7" height="1"/>
<rect x="88" y="299" width="7" height="1"/>
<rect x="88" y="327" width="7" height="1"/>
<rect x="88" y="356" width="7" height="1"/>
<rect x="88" y="384" width="7" height="1"/>
<rect x="88" y="413" width="7" height="1"/>
<rect x="88" y="442" width="7" height="1"/>
<rect x="88" y="470" width="7" height="1"/>
<rect x="88" y="499" width="7" height="1"/>
<rect x="88" y="527" width="7" height="1"/>
<rect x="88" y="556" width="7" height="1"/>
<rect x="88" y="584" width="7" height="1"/>
<rect x="88" y="613" width="7" height="1"/>
<rect x="88" y="641" width="7" height="1"/>
<rect x="88" y="670" width="7" height="1"/>
<rect x="88" y="698" width="7" height="1"/>
<rect x="88" y="726" width="7" height="1"/>
</g>
<path d="M1020.5 159.5 L1032.5 159.5 L1026.5 166 Z" fill="#000"/>
<path d="M85 227.5 L85 238.5 L91.5 233 Z" fill="#000"/>
</svg>
<div class="a" style="left:1139px;top:147px;width:15px;height:585px;background:#f8f8f8"></div>
<div class="a" style="left:1143px;top:317px;width:8px;height:268px;background:#808080;border-radius:4px"></div>
<div class="a" style="left:95px;top:732px;width:1059px;height:15px;background:#f8f8f8"></div>
<div class="a" style="left:72px;top:732px;width:23px;height:15px;background:#ececec"></div>
<div class="a" style="left:1083px;top:732px;width:71px;height:15px;background:#ececec"></div>
<div class="a" style="left:215px;top:736px;width:748px;height:8px;background:#808080;border-radius:4px"></div>
<span class="t" style="right:347.00px;top:734.04px;font-size:13.3px;color:#1d1d1d;">10 &lt; 100</span>
<div class="a" style="left:72px;top:747px;width:1082px;height:24px;background:#fff;border-top:2px solid #c9c9c9;border-bottom:1px solid #c6c6c6"></div>
<div class="a" style="left:1139px;top:749px;width:15px;height:21px;background:#f8f8f8"></div>
<div class="a" style="left:1142px;top:750px;width:8px;height:17px;background:#808080;border-radius:4px"></div>
<span class="t" style="left:77.30px;top:751.14px;font-size:13.3px;color:#1a1ae0;"><i>Kommando:</i> layeradd</span>
<div class="a" style="left:72px;top:771px;width:1082px;height:27px;background:#ececec"></div>
<span class="t" style="left:73.30px;top:778.34px;font-size:13.3px;color:#111;">Kommando:</span>
<div class="a" style="left:148px;top:776px;width:979px;height:18px;background:#fff"></div>
<div class="a" style="left:1127px;top:772px;width:27px;height:26px;background:linear-gradient(#f4f4f4,#e4e4e4);border:1px solid #b4b4b4"></div>
<svg class="a" style="left:1131px;top:777px" width="18" height="15" viewBox="0 0 18 15"><rect x="1.5" y="1.5" width="14" height="11" fill="#fff" stroke="#222" stroke-width="1"/><rect x="1.5" y="1.5" width="14" height="3" fill="#111"/><rect x="13" y="2" width="2" height="1.5" fill="#fff"/></svg>
<div class="a" style="left:0px;top:798px;width:1500px;height:46px;background:#dcdcdc;border-top:1px solid #cfcfcf"></div>
<span class="t" style="left:2.30px;top:807.77px;font-size:9.6px;color:#222;letter-spacing:.42px">392.6832,263.0916</span>
<span class="t" style="left:2.30px;top:827.67px;font-size:9.6px;color:#222;letter-spacing:.42px">@392.6832,263.0916</span>
<div class="a" style="left:254px;top:802px;width:1px;height:42px;background:#8c8c8c"></div>
<span class="t" style="left:256.20px;top:807.77px;font-size:9.6px;color:#222;letter-spacing:.42px">472.6704&lt;34°</span>
<span class="t" style="left:256.20px;top:827.67px;font-size:9.6px;color:#222;letter-spacing:.42px">@472.6704&lt;34°</span>
<div class="a" style="left:506px;top:819px;width:6px;height:6px;background:#c6c6c6;border-radius:50%"></div>
<span class="t" style="left:549.00px;top:817.30px;font-size:9.8px;color:#222;letter-spacing:.16px">Element oder Bereich selektieren</span>
<svg class="a" style="left:715px;top:804px" width="22" height="34" viewBox="715 804 22 34"><rect x="717.5" y="806" width="17" height="29.5" rx="8.5" fill="#fff" stroke="#333" stroke-width="1"/><path d="M717.5 818 Q726 815.5 734.5 818" fill="none" stroke="#333" stroke-width="1"/><line x1="726" y1="806" x2="726" y2="816.5" stroke="#333" stroke-width=".8"/><rect x="724.3" y="808" width="3.4" height="6" rx="1.7" fill="#fff" stroke="#333" stroke-width=".8"/></svg>
<div class="a" style="left:940px;top:819px;width:6px;height:6px;background:#c6c6c6;border-radius:50%"></div>
<span class="t" style="left:949.00px;top:811.96px;font-size:9.5px;color:#222;letter-spacing:.32px">Selektierte Objekte:</span>
<span class="t" style="left:949.00px;top:822.96px;font-size:9.5px;color:#222;letter-spacing:.32px">10 Objekte auf 2 Layer.</span>
<div class="a" style="left:1269px;top:819px;width:6px;height:6px;background:#c6c6c6;border-radius:50%"></div>
<div class="a" style="left:1154px;top:122px;width:301px;height:676px;background:#ececec;border-left:1px solid #d0d0d0"></div>
<div class="a" style="left:1154px;top:122px;width:301px;height:1px;background:#c4c4c4"></div>
<svg class="a" style="left:1156px;top:125px" width="16" height="16" viewBox="-8 -8 16 16"><circle r="7" fill="#6f6f6f"/><path d="M-2.8 -2.8 L2.8 2.8 M2.8 -2.8 L-2.8 2.8" stroke="#fff" stroke-width="1.9"/></svg>
<svg class="a" style="left:1174px;top:125px" width="16" height="16" viewBox="-8 -8 16 16"><circle r="7" fill="#6f6f6f"/><rect x="-1.5" y="-3.5" width="5" height="4" fill="none" stroke="#fff" stroke-width="1.1"/><rect x="-3.7" y="-1" width="5" height="4" fill="#6f6f6f" stroke="#fff" stroke-width="1.1"/></svg>
<span class="t" style="left:1022.00px;width:600px;text-align:center;top:127.64px;font-size:12px;color:#262626;">Layerliste</span>
<div class="a" style="left:1155px;top:143px;width:300px;height:2px;background:#d6d6d6"></div>
<div class="a" style="left:1155px;top:145px;width:60px;height:26px;background:linear-gradient(#e6e6e6,#f4f4f4);border:1px solid #a9a9a9"></div>
<div class="a" style="left:1215px;top:145px;width:60px;height:26px;background:linear-gradient(#e6e6e6,#f4f4f4);border:1px solid #a9a9a9"></div>
<div class="a" style="left:1275.5px;top:145px;width:59.5px;height:26px;background:#b9b9b9;border-radius:5px"></div>
<div class="a" style="left:1335px;top:145px;width:60px;height:26px;background:linear-gradient(#e6e6e6,#f4f4f4);border:1px solid #a9a9a9"></div>
<div class="a" style="left:1395px;top:145px;width:60px;height:26px;background:linear-gradient(#e6e6e6,#f4f4f4);border:1px solid #a9a9a9"></div>
<svg class="a" style="left:1155px;top:145px" width="300" height="26" viewBox="1155 145 300 26">
<g id="eye"><path d="M1177.6 157.5 Q1185 148.5 1192.4 157.5 Q1185 166 1177.6 157.5 Z" fill="#000"/><ellipse cx="1185" cy="157.8" rx="3.9" ry="3" fill="#fff"/><circle cx="1185" cy="157" r="2.4" fill="#000"/></g>
<g fill="#9a9a9a" opacity=".6"><path d="M1237.6 157.5 Q1245 148.5 1252.4 157.5 Q1245 166 1237.6 157.5 Z"/></g>
<ellipse cx="1245" cy="157.8" rx="3.9" ry="3" fill="#eee"/><circle cx="1245" cy="157" r="2.4" fill="#b0b0b0"/>
<path d="M1305 151.5 v12 M1299 157.5 h12" stroke="#000" stroke-width="3.6"/>
<path d="M1305 152 v11 M1299.5 157.5 h11" stroke="#e00" stroke-width="2.4"/>
<rect x="1359" y="155.8" width="12" height="3.6" fill="#e00" stroke="#600" stroke-width=".5"/>
<path d="M1418 164 L1419.5 159.5 L1429.5 149.8 L1431.8 152 L1421.8 161.8 Z" fill="#e8a838" stroke="#8a5a10" stroke-width=".7"/>
<path d="M1429.5 149.8 L1431.8 152 L1432.5 151 L1430.5 149 Z" fill="#e03030"/>
</svg>
<div class="a" style="left:1155px;top:172px;width:300px;height:387px;background:#fff;border:1px solid #b9b9b9;border-right:none"></div>
<div class="a" style="left:1156px;top:193px;width:298px;height:20px;background:#0b4ed6"></div>
<div class="a" style="left:1181px;top:179px;width:16px;height:9px;background:#fff;border:1px solid #000"></div>
<div class="a" style="left:1181px;top:199px;width:16px;height:9px;background:#3a4250"></div>
<div class="a" style="left:1181px;top:219px;width:16px;height:9px;background:#000"></div>
<span class="t" style="left:1203.30px;top:176.24px;font-size:13.3px;color:#111;">0</span>
<span class="t" style="left:1203.30px;top:195.74px;font-size:13.3px;color:#fff;">Kadasternummern</span>
<span class="t" style="left:1203.30px;top:216.14px;font-size:13.3px;color:#111;">Text</span>
<svg class="a" style="left:1413px;top:172.6px" width="40" height="20" viewBox="-10 -10 40 20"><g><path d="M-7.4 0 Q0 -9 7.4 0 Q0 8.5 -7.4 0 Z" fill="#000"/><ellipse cx="0" cy=".3" rx="3.9" ry="3" fill="#fff"/><circle cx="0" cy="-.5" r="2.4" fill="#000"/></g><g transform="translate(22,0)"><path d="M-3.5 -1 v-3 a3.5 3.5 0 0 1 7 0 v3" fill="none" stroke="#b3b3b3" stroke-width="1.3"/><rect x="-4.8" y="-1.5" width="9.6" height="8" fill="#b3b3b3"/></g></svg>
<svg class="a" style="left:1413px;top:192.6px" width="40" height="20" viewBox="-10 -10 40 20"><g><path d="M-7.4 0 Q0 -9 7.4 0 Q0 8.5 -7.4 0 Z" fill="#000"/><ellipse cx="0" cy=".3" rx="3.9" ry="3" fill="#0b4ed6"/><circle cx="0" cy="-.5" r="2.4" fill="#000"/></g><g transform="translate(22,0)"><path d="M-3.5 -1 v-3 a3.5 3.5 0 0 1 7 0 v3" fill="none" stroke="#b3b3b3" stroke-width="1.3"/><rect x="-4.8" y="-1.5" width="9.6" height="8" fill="#b3b3b3"/></g></svg>
<svg class="a" style="left:1413px;top:212.6px" width="40" height="20" viewBox="-10 -10 40 20"><g><path d="M-7.4 0 Q0 -9 7.4 0 Q0 8.5 -7.4 0 Z" fill="#000"/><ellipse cx="0" cy=".3" rx="3.9" ry="3" fill="#fff"/><circle cx="0" cy="-.5" r="2.4" fill="#000"/></g><g transform="translate(22,0)"><path d="M-3.5 -1 v-3 a3.5 3.5 0 0 1 7 0 v3" fill="none" stroke="#b3b3b3" stroke-width="1.3"/><rect x="-4.8" y="-1.5" width="9.6" height="8" fill="#b3b3b3"/></g></svg>
<svg class="a" style="left:1393px;top:195px" width="16" height="16" viewBox="0 0 16 16"><path d="M1.5 14.5 L3 10 L12.5 1 L14.8 3.2 L5.3 12.5 Z" fill="#e8a838" stroke="#8a5a10" stroke-width=".7"/><path d="M12.5 1 L14.8 3.2 L15.5 2.2 L13.5 .3 Z" fill="#e03030"/></svg>
<svg class="a" style="left:1156px;top:561px" width="16" height="16" viewBox="-8 -8 16 16"><circle r="7" fill="#6f6f6f"/><path d="M-2.8 -2.8 L2.8 2.8 M2.8 -2.8 L-2.8 2.8" stroke="#fff" stroke-width="1.9"/></svg>
<svg class="a" style="left:1174px;top:561px" width="16" height="16" viewBox="-8 -8 16 16"><circle r="7" fill="#6f6f6f"/><rect x="-1.5" y="-3.5" width="5" height="4" fill="none" stroke="#fff" stroke-width="1.1"/><rect x="-3.7" y="-1" width="5" height="4" fill="#6f6f6f" stroke="#fff" stroke-width="1.1"/></svg>
<span class="t" style="left:1022.00px;width:600px;text-align:center;top:563.64px;font-size:12px;color:#262626;">Selektionsfilter</span>
<div class="a" style="left:1155px;top:579.5px;width:300px;height:1.5px;background:#d3d3d3"></div>
<div class="a" style="left:1167px;top:594px;width:276px;height:134px;background:#e3e3e3;border-top:1px solid #dadada"></div>
<span class="t" style="left:1174.80px;top:585.37px;font-size:11.5px;color:#1d1d1d;">Filter</span>
<div class="a" style="left:1265px;top:614px;width:162px;height:22px;background:#fff;border:1px solid #cfd3da;border-radius:5px;box-shadow:0 .5px 1px rgba(0,0,0,.08)"></div>
<div class="a" style="left:1409px;top:617px;width:16px;height:16px;background:#0b7bff;border-radius:4px"></div>
<svg class="a" style="left:1409px;top:617px" width="16" height="16" viewBox="-8 -8.0 16 16"><path d="M-3 -1.6 L0 -4.4 L3 -1.6 M-3 1.6 L0 4.4 L3 1.6" fill="none" stroke="#fff" stroke-width="1.3"/></svg>
<div class="a" style="left:1265px;top:640px;width:162px;height:22px;background:#fff;border:1px solid #cfd3da;border-radius:5px;box-shadow:0 .5px 1px rgba(0,0,0,.08)"></div>
<div class="a" style="left:1409px;top:643px;width:16px;height:16px;background:#0b7bff;border-radius:4px"></div>
<svg class="a" style="left:1409px;top:643px" width="16" height="16" viewBox="-8 -8.0 16 16"><path d="M-3 -1.6 L0 -4.4 L3 -1.6 M-3 1.6 L0 4.4 L3 1.6" fill="none" stroke="#fff" stroke-width="1.3"/></svg>
<div class="a" style="left:1265px;top:666px;width:162px;height:22px;background:#fff;border:1px solid #cfd3da;border-radius:5px;box-shadow:0 .5px 1px rgba(0,0,0,.08)"></div>
<div class="a" style="left:1409px;top:669px;width:16px;height:16px;background:#0b7bff;border-radius:4px"></div>
<svg class="a" style="left:1409px;top:669px" width="16" height="16" viewBox="-8 -8.0 16 16"><path d="M-3 -1.6 L0 -4.4 L3 -1.6 M-3 1.6 L0 4.4 L3 1.6" fill="none" stroke="#fff" stroke-width="1.3"/></svg>
<div class="a" style="left:1265px;top:693px;width:162px;height:20px;background:#fff;border-bottom:1px solid #b9b9b9;box-shadow:0 0 0 .5px #d8d8d8"></div>
<span class="t" style="left:1182.20px;top:618.94px;font-size:13.3px;color:#1d1d1d;">Objekttyp:</span>
<span class="t" style="left:1268.50px;top:618.94px;font-size:13.3px;color:#1d1d1d;">Kreis</span>
<span class="t" style="left:1182.20px;top:644.74px;font-size:13.3px;color:#1d1d1d;">Eigenschaft:</span>
<span class="t" style="left:1268.50px;top:644.74px;font-size:13.3px;color:#1d1d1d;">Durchmesser</span>
<span class="t" style="left:1182.20px;top:670.54px;font-size:13.3px;color:#1d1d1d;">Vergleich:</span>
<span class="t" style="left:1268.50px;top:670.54px;font-size:13.3px;color:#1d1d1d;">= (ist gleich)</span>
<span class="t" style="left:1182.20px;top:696.24px;font-size:13.3px;color:#1d1d1d;">Wert:</span>
<span class="t" style="left:1268.80px;top:696.24px;font-size:13.3px;color:#1d1d1d;">1</span>
<div class="a" style="left:1167px;top:744px;width:70px;height:26px;background:linear-gradient(#e8e8e8,#f6f6f6);border:1px solid #a8a8a8"></div>
<div class="a" style="left:1236px;top:744px;width:70px;height:26px;background:linear-gradient(#e8e8e8,#f6f6f6);border:1px solid #a8a8a8"></div>
<div class="a" style="left:1305px;top:744px;width:70px;height:26px;background:linear-gradient(#e8e8e8,#f6f6f6);border:1px solid #a8a8a8"></div>
<div class="a" style="left:1374px;top:744px;width:70px;height:26px;background:linear-gradient(#e8e8e8,#f6f6f6);border:1px solid #a8a8a8"></div>
<svg class="a" style="left:1167px;top:744px" width="276" height="26" viewBox="1167 744 276 26">
<rect x="1194.5" y="750.5" width="12.5" height="12.5" fill="#f59595" stroke="#444" stroke-width=".8" stroke-dasharray="1.5 1"/>
<rect x="1264" y="750.5" width="10" height="10" fill="#f59595" stroke="#444" stroke-width=".9"/>
<rect x="1267" y="753.5" width="10" height="10" fill="#f59595" stroke="#444" stroke-width=".8" stroke-dasharray="1.5 1"/>
<rect x="1332.5" y="750.5" width="10" height="10" fill="#f59595" stroke="#444" stroke-width=".9"/>
<rect x="1335.5" y="753.5" width="10" height="10" fill="#fff" stroke="#444" stroke-width=".8" stroke-dasharray="1.5 1"/>
<rect x="1336" y="754" width="6" height="6" fill="#fff"/>
<rect x="1401.5" y="750.5" width="10" height="10" fill="#fff" stroke="#444" stroke-width=".9"/>
<rect x="1404.5" y="753.5" width="10" height="10" fill="none" stroke="#444" stroke-width=".8" stroke-dasharray="1.5 1"/>
<rect x="1405" y="754" width="6.5" height="6.5" fill="#f59595"/>
</svg>
<span class="t" style="left:607.00px;top:128.84px;font-size:12px;color:#262626;">* map.dxf</span>
<svg class="a" style="left:95px;top:126.8px" width="16" height="16" viewBox="0 0 16 16">
<circle cx="7" cy="7" r="5.6" fill="#e8eef8" stroke="#2a3f8a" stroke-width="2"/>
<path d="M4 5 L10 9 M5 9 L9 4" stroke="#c44" stroke-width=".6"/>
<path d="M7 7 L12.5 12.5" stroke="#f0b020" stroke-width="2.2"/>
<path d="M12 12 L14 14" stroke="#e04040" stroke-width="2"/>
</svg>
<div class="a" style="left:94px;top:170px;width:1px;height:562px;background:#fafafa"></div>
<div class="a" style="left:566px;top:235px;width:368px;height:373px;background:#ebebeb;border:3px solid #ababab;border-radius:3px;box-shadow:inset 0 0 0 1px #f3f3f3"></div>
<span class="t" style="left:588.00px;top:261.74px;font-size:13.3px;color:#1d1d1d;">Übergeordneter Layer:</span>
<div class="a" style="left:732px;top:257px;width:180px;height:22px;background:#fff;border:1px solid #cfd3da;border-radius:5px"></div>
<div class="a" style="left:893px;top:260px;width:16px;height:16px;background:#0b7bff;border-radius:4px"></div>
<svg class="a" style="left:893px;top:260px" width="16" height="16" viewBox="-8 -8 16 16"><path d="M-3 -1.6 L0 -4.4 L3 -1.6 M-3 1.6 L0 4.4 L3 1.6" fill="none" stroke="#fff" stroke-width="1.3"/></svg>
<span class="t" style="left:588.00px;top:292.74px;font-size:13.3px;color:#1d1d1d;">Layername:</span>
<div class="a" style="left:733px;top:290px;width:178px;height:19px;background:#fff;border-bottom:1px solid #b9b9b9;box-shadow:0 0 0 .5px #d8d8d8"></div>
<span class="t" style="left:734.50px;top:293.14px;font-size:13.3px;color:#1d1d1d;">Referenzpunkte</span>
<div class="a" style="left:588px;top:324px;width:324px;height:167px;background:#e3e3e3;border-top:1px solid #d9d9d9"></div>
<span class="t" style="left:595.30px;top:314.89px;font-size:12.3px;color:#1d1d1d;background:transparent">Attribute</span>
<div class="a" style="left:685px;top:344px;width:212px;height:22px;background:#fff;border:1px solid #cfd3da;border-radius:5px;box-shadow:0 .5px 1px rgba(0,0,0,.08)"></div>
<div class="a" style="left:878px;top:347px;width:16px;height:16px;background:#0b7bff;border-radius:4px"></div>
<svg class="a" style="left:878px;top:347px" width="16" height="16" viewBox="-8 -8.0 16 16"><path d="M-3 -1.6 L0 -4.4 L3 -1.6 M-3 1.6 L0 4.4 L3 1.6" fill="none" stroke="#fff" stroke-width="1.3"/></svg>
<span class="t" style="right:824.30px;top:348.54px;font-size:13.3px;color:#1d1d1d;">Farbe:</span>
<div class="a" style="left:689px;top:351px;width:16px;height:9px;background:#000"></div>
<span class="t" style="left:711.00px;top:348.54px;font-size:13.3px;color:#1d1d1d;">Schwarz</span>
<div class="a" style="left:685px;top:376px;width:212px;height:22px;background:#fff;border:1px solid #cfd3da;border-radius:5px;box-shadow:0 .5px 1px rgba(0,0,0,.08)"></div>
<div class="a" style="left:878px;top:379px;width:16px;height:16px;background:#0b7bff;border-radius:4px"></div>
<svg class="a" style="left:878px;top:379px" width="16" height="16" viewBox="-8 -8.0 16 16"><path d="M-3 -1.6 L0 -4.4 L3 -1.6 M-3 1.6 L0 4.4 L3 1.6" fill="none" stroke="#fff" stroke-width="1.3"/></svg>
<span class="t" style="right:824.30px;top:380.14px;font-size:13.3px;color:#1d1d1d;">Linienbreite:</span>
<div class="a" style="left:689px;top:387px;width:16px;height:1px;background:#222"></div>
<span class="t" style="left:711.00px;top:380.14px;font-size:13.3px;color:#1d1d1d;">0.25mm (ISO)</span>
<div class="a" style="left:685px;top:408px;width:212px;height:22px;background:#fff;border:1px solid #cfd3da;border-radius:5px;box-shadow:0 .5px 1px rgba(0,0,0,.08)"></div>
<div class="a" style="left:878px;top:411px;width:16px;height:16px;background:#0b7bff;border-radius:4px"></div>
<svg class="a" style="left:878px;top:411px" width="16" height="16" viewBox="-8 -8.0 16 16"><path d="M-3 -1.6 L0 -4.4 L3 -1.6 M-3 1.6 L0 4.4 L3 1.6" fill="none" stroke="#fff" stroke-width="1.3"/></svg>
<span class="t" style="right:824.30px;top:411.34px;font-size:13.3px;color:#1d1d1d;">Linientyp:</span>
<span class="t" style="left:689.20px;top:411.34px;font-size:13.3px;color:#1d1d1d;">Durchgehend</span>
<div class="a" style="left:603px;top:440px;width:14px;height:14px;background:#0b7bff;border-radius:3px"></div>
<svg class="a" style="left:603px;top:440px" width="14" height="14" viewBox="0 0 14 14"><path d="M3.3 7.3 L6 10 L10.8 3.6" fill="none" stroke="#fff" stroke-width="1.8" stroke-linecap="round" stroke-linejoin="round"/></svg>
<span class="t" style="left:621.30px;top:440.64px;font-size:13.3px;color:#1d1d1d;">Plottbar</span>
<div class="a" style="left:603px;top:463px;width:14px;height:14px;background:#0b7bff;border-radius:3px"></div>
<svg class="a" style="left:603px;top:463px" width="14" height="14" viewBox="0 0 14 14"><path d="M3.3 7.3 L6 10 L10.8 3.6" fill="none" stroke="#fff" stroke-width="1.8" stroke-linecap="round" stroke-linejoin="round"/></svg>
<span class="t" style="left:621.30px;top:463.34px;font-size:13.3px;color:#1d1d1d;">Fangbar</span>
<div class="a" style="left:588px;top:507px;width:14px;height:14px;background:#0b7bff;border-radius:3px"></div>
<svg class="a" style="left:588px;top:507px" width="14" height="14" viewBox="0 0 14 14"><path d="M3.3 7.3 L6 10 L10.8 3.6" fill="none" stroke="#fff" stroke-width="1.8" stroke-linecap="round" stroke-linejoin="round"/></svg>
<span class="t" style="left:606.30px;top:507.84px;font-size:13.3px;color:#1d1d1d;">Selektion auf den neuen Layer verschieben</span>
<div class="a" style="left:734px;top:567px;width:94px;height:20px;background:#fff;border-radius:5px;box-shadow:0 0 0 .5px #c8c8c8,0 1px 1px rgba(0,0,0,.15)"></div>
<span class="t" style="left:481.00px;width:600px;text-align:center;top:570.24px;font-size:13.3px;color:#1d1d1d;">Abbrechen</span>
<div class="a" style="left:844px;top:567px;width:67px;height:20px;background:linear-gradient(#2f8dff,#0a76fb);border-radius:5px;box-shadow:0 1px 1px rgba(0,0,0,.15)"></div>
<span class="t" style="left:577.50px;width:600px;text-align:center;top:570.24px;font-size:13.3px;color:#fff;">OK</span>
<svg class="a" style="left:770px;top:247px" width="104" height="104" viewBox="770 247 104 104">
<defs><radialGradient id="ring" cx="821.9" cy="298.7" r="39" gradientUnits="userSpaceOnUse">
<stop offset="0" stop-color="#fff" stop-opacity="0"/><stop offset=".74" stop-color="#fff" stop-opacity="0"/>
<stop offset=".84" stop-color="#fff" stop-opacity=".55"/><stop offset=".89" stop-color="#9fb6cc" stop-opacity=".45"/>
<stop offset=".95" stop-color="#a0b6cb" stop-opacity=".8"/><stop offset=".985" stop-color="#b5c6d6" stop-opacity=".6"/><stop offset="1" stop-color="#b5c6d6" stop-opacity="0"/></radialGradient></defs>
<circle cx="821.9" cy="298.7" r="39" fill="url(#ring)"/>
<path d="M823 300 L823 320.8 L827.6 316.5 L831.4 325.6 L834.7 324.2 L830.9 315.3 L837.4 315.1 Z" fill="#fff" stroke="#000" stroke-width="1.2" stroke-linejoin="round"/>
</svg>
<div class="a" style="left:1455px;top:122px;width:45px;height:676px;background:linear-gradient(90deg,#efefef,#e4e4e4 45%,#cdcdcd 95%,#d8d8d8);border-top:1px solid #c4c4c4;border-left:1px solid #d8d8d8"></div>
<svg class="a" style="left:1455px;top:122px" width="45" height="460" viewBox="1455 122 45 460"><g fill="#a0a0a0"><rect x="1462" y="131" width="2" height="2"/><rect x="1468" y="131" width="2" height="2"/><rect x="1474" y="131" width="2" height="2"/><rect x="1480" y="131" width="2" height="2"/><rect x="1486" y="131" width="2" height="2"/></g><rect x="1456" y="135" width="43" height="43" rx="6" fill="#b9b9b9"/><rect x="1456" y="330.5" width="43" height="42.0" rx="6" fill="#b9b9b9"/><rect x="1456" y="433" width="43" height="43" rx="6" fill="#b9b9b9"/><line x1="1458" y1="276.5" x2="1499" y2="276.5" stroke="#777" stroke-width="1" stroke-dasharray="1 2.5"/><line x1="1458" y1="425.5" x2="1499" y2="425.5" stroke="#777" stroke-width="1" stroke-dasharray="1 2.5"/><line x1="1458" y1="528.5" x2="1499" y2="528.5" stroke="#777" stroke-width="1" stroke-dasharray="1 2.5"/><rect x="1463.5" y="142.5" width="27" height="27" fill="#fff" stroke="#222" stroke-width="1"/><rect x="1463.5" y="142.5" width="27" height="4.5" fill="#000"/><rect x="1464.6" y="143.6" width="2.6" height="2.6" fill="#fff"/><rect x="1463.5" y="189.5" width="27" height="27" fill="#fff" stroke="#222" stroke-width="1"/><rect x="1463.5" y="189.5" width="27" height="4.5" fill="#000"/><rect x="1464.6" y="190.6" width="2.6" height="2.6" fill="#fff"/><rect x="1463.5" y="235.5" width="27" height="27" fill="#fff" stroke="#222" stroke-width="1"/><rect x="1463.5" y="235.5" width="27" height="4.5" fill="#000"/><rect x="1464.6" y="236.6" width="2.6" height="2.6" fill="#fff"/><rect x="1463.5" y="291.5" width="27" height="27" fill="#fff" stroke="#222" stroke-width="1"/><rect x="1463.5" y="291.5" width="27" height="4.5" fill="#000"/><rect x="1464.6" y="292.6" width="2.6" height="2.6" fill="#fff"/><rect x="1463.5" y="337.5" width="27" height="27" fill="#fff" stroke="#222" stroke-width="1"/><rect x="1463.5" y="337.5" width="27" height="4.5" fill="#000"/><rect x="1464.6" y="338.6" width="2.6" height="2.6" fill="#fff"/><rect x="1463.5" y="384.5" width="27" height="27" fill="#fff" stroke="#222" stroke-width="1"/><rect x="1463.5" y="384.5" width="27" height="4.5" fill="#000"/><rect x="1464.6" y="385.6" width="2.6" height="2.6" fill="#fff"/><rect x="1463.5" y="440.5" width="27" height="27" fill="#fff" stroke="#222" stroke-width="1"/><rect x="1463.5" y="440.5" width="27" height="4.5" fill="#000"/><rect x="1464.6" y="441.6" width="2.6" height="2.6" fill="#fff"/><rect x="1463.5" y="487.5" width="27" height="27" fill="#fff" stroke="#222" stroke-width="1"/><rect x="1463.5" y="487.5" width="27" height="4.5" fill="#000"/><rect x="1464.6" y="488.6" width="2.6" height="2.6" fill="#fff"/><path d="M1471 158 L1471 165 L1474 167 L1474 160 Z" fill="#999" stroke="#333" stroke-width=".6"/><path d="M1473 157 L1483.5 152 L1483.5 160 L1473 165 Z" fill="#fff" stroke="#333" stroke-width=".7"/><path d="M1470.5 158.5 L1481 153.5 M1471.5 158 L1474.5 156" stroke="#333" stroke-width=".6"/><path d="M1476 162 L1479 155 L1480 161 M1477 160 L1480 159" fill="none" stroke="#f03030" stroke-width=".7"/><rect x="1469.5" y="197.5" width="12" height="9" fill="#f8efc0" stroke="#555" stroke-width=".8"/><circle cx="1478.5" cy="206" r="4.8" fill="#f8efc0" fill-opacity=".6" stroke="#555" stroke-width=".8"/><rect x="1469" y="244" width="16" height="11" rx="2" fill="#f4f6fa" stroke="#b8cce8" stroke-width=".8"/><rect x="1466" y="299" width="3.5" height="2.6" fill="#000"/><rect x="1466" y="304" width="3.5" height="2.6" fill="#000"/><rect x="1466" y="309" width="3.5" height="2.6" fill="#000"/><rect x="1471.5" y="299" width="16" height="2.6" fill="#fff" stroke="#333" stroke-width=".6"/><rect x="1471.5" y="304" width="16" height="2.6" fill="#fff" stroke="#333" stroke-width=".6"/><rect x="1471.5" y="309" width="16" height="2.6" fill="#fff" stroke="#333" stroke-width=".6"/><path d="M1470 345.5 Q1477 343 1484 345.5 L1478 351.5 L1478 359 L1476 358 L1476 351.5 Z" fill="#888" stroke="#444" stroke-width=".6"/><ellipse cx="1477" cy="345.5" rx="7" ry="1.5" fill="#bbb" stroke="#444" stroke-width=".5"/><path d="M1470 392 L1475 396 L1475 402 L1470 406 Z" fill="#fff" stroke="#333" stroke-width=".7"/><rect x="1475" y="395.5" width="8" height="7" rx="1.5" fill="#999" stroke="#444" stroke-width=".5"/><line x1="1467" y1="399" x2="1487" y2="399" stroke="#f08080" stroke-width=".5" stroke-dasharray="1 1"/><g stroke="#777" stroke-width=".6"><line x1="1466" y1="449" x2="1474" y2="449"/><line x1="1466" y1="452" x2="1473" y2="452"/><line x1="1466" y1="455" x2="1475" y2="455"/><line x1="1466" y1="458" x2="1476" y2="458"/></g><line x1="1463.5" y1="462" x2="1490.5" y2="462" stroke="#222" stroke-width=".7"/><g stroke="#444" stroke-width=".6"><line x1="1466" y1="465" x2="1468" y2="465"/><line x1="1473" y1="465" x2="1487" y2="465"/></g><rect x="1470.5" y="494.5" width="13" height="15" rx="1" fill="#c8a060" stroke="#8a6a30" stroke-width=".6"/><rect x="1472" y="496.5" width="10" height="12" fill="#f4f4f4"/><rect x="1474.5" y="493" width="5" height="3" fill="#999"/><g stroke="#bbb" stroke-width=".6"><line x1="1473.5" y1="500" x2="1480.5" y2="500"/><line x1="1473.5" y1="502.5" x2="1480.5" y2="502.5"/><line x1="1473.5" y1="505" x2="1479" y2="505"/></g></svg>
<svg class="a" style="left:1460px;top:544px" width="36" height="26" viewBox="1460 544 36 26"><path d="M1465 549.2 H1471 A3.95 3.95 0 0 1 1471 557.2 H1467.2 M1471 557.2 A4.1 4.1 0 0 1 1471 565.4 H1465 M1478.4 548.6 V565.4 H1483 A6.5 6.5 0 0 0 1489.5 558.9 V555.1 A6.5 6.5 0 0 0 1483 548.6 Z" fill="none" stroke="#000" stroke-width="1.4"/></svg>
<svg class="a" style="left:0;top:0" width="1500" height="122" viewBox="0 0 1500 122">
<defs>
<linearGradient id="gBtn2" x1="0" y1="0" x2="0" y2="1"><stop offset="0" stop-color="#f8f8f8"/><stop offset=".5" stop-color="#e6e6e6"/><stop offset="1" stop-color="#f2f2f2"/></linearGradient>
<linearGradient id="gBlue" x1="0" y1="0" x2="0" y2="1"><stop offset="0" stop-color="#8fb4f0"/><stop offset="1" stop-color="#4d7fd6"/></linearGradient>
<linearGradient id="gFl" x1="0" y1="0" x2="1" y2="1"><stop offset="0" stop-color="#9fc0ff"/><stop offset="1" stop-color="#3a78f2"/></linearGradient>
<linearGradient id="gPaper" x1="0" y1="0" x2="1" y2="1"><stop offset="0" stop-color="#fafafa"/><stop offset="1" stop-color="#e2e2e2"/></linearGradient>
<radialGradient id="gGlow"><stop offset="0" stop-color="#ffffc0"/><stop offset=".45" stop-color="#f0ea20"/><stop offset="1" stop-color="#f0ea20" stop-opacity="0"/></radialGradient>
<radialGradient id="gMag" cx=".4" cy=".35" r=".7"><stop offset="0" stop-color="#d8e8fb"/><stop offset=".6" stop-color="#7aa6e0"/><stop offset="1" stop-color="#4f86d4"/></radialGradient>
<linearGradient id="gGreen" x1="0" y1="0" x2="0" y2="1"><stop offset="0" stop-color="#52c05a"/><stop offset="1" stop-color="#1d8a2a"/></linearGradient>
</defs>
<!-- handles -->
<g fill="#a2a2a2">
<rect x="7" y="47" width="2" height="2"/><rect x="7" y="53" width="2" height="2"/><rect x="7" y="59" width="2" height="2"/><rect x="7" y="65" width="2" height="2"/><rect x="7" y="71" width="2" height="2"/>
<rect x="87" y="47" width="2" height="2"/><rect x="87" y="53" width="2" height="2"/><rect x="87" y="59" width="2" height="2"/><rect x="87" y="65" width="2" height="2"/><rect x="87" y="71" width="2" height="2"/>
<rect x="402" y="47" width="2" height="2"/><rect x="402" y="53" width="2" height="2"/><rect x="402" y="59" width="2" height="2"/><rect x="402" y="65" width="2" height="2"/><rect x="402" y="71" width="2" height="2"/>
<rect x="707" y="47" width="2" height="2"/><rect x="707" y="53" width="2" height="2"/><rect x="707" y="59" width="2" height="2"/><rect x="707" y="65" width="2" height="2"/><rect x="707" y="71" width="2" height="2"/>
<rect x="7" y="92" width="2" height="2"/><rect x="7" y="98" width="2" height="2"/><rect x="7" y="104" width="2" height="2"/><rect x="7" y="110" width="2" height="2"/>
</g>
<!-- dotted separators -->
<g stroke="#666" stroke-width="1" stroke-dasharray="1 2.5">
<line x1="186.5" y1="41" x2="186.5" y2="82"/>
<line x1="288.5" y1="41" x2="288.5" y2="82"/>
<line x1="344.5" y1="41" x2="344.5" y2="82"/>
<line x1="501.5" y1="41" x2="501.5" y2="82"/>
<line x1="557.5" y1="41" x2="557.5" y2="82"/>
<line x1="853.5" y1="41" x2="853.5" y2="82"/>
<line x1="910.5" y1="41" x2="910.5" y2="82"/>
<line x1="67.5" y1="86" x2="67.5" y2="120"/>
</g>
<!-- arrow -->
<path d="M27.5 51 L27.5 68 L31.2 64.6 L34.2 71 L36.6 69.9 L33.8 63.6 L38.6 63.6 Z" fill="#fff" stroke="#111" stroke-width="1.1" stroke-linejoin="round"/>
<!-- new doc -->
<rect x="100.5" y="47.5" width="24" height="27.5" rx="1.5" fill="url(#gPaper)" stroke="#888" stroke-width="1"/>
<line x1="101" y1="75" x2="124" y2="75" stroke="#777" stroke-width="1.2"/>
<circle cx="120.7" cy="52.6" r="6.5" fill="url(#gGlow)"/>
<!-- open folder -->
<path d="M143 49 L149 49 L150 50 L150 72 L145 72 Z" fill="#8c8c8c"/>
<path d="M150.5 47.5 L172 47.5 L169 64 L148 64 Z" fill="#f4f4f4" stroke="#999" stroke-width=".8"/>
<line x1="153" y1="51" x2="168" y2="51" stroke="#bbb" stroke-width="1.3"/><line x1="153" y1="54" x2="167" y2="54" stroke="#bbb" stroke-width="1.3"/>
<path d="M150 58.2 L174.8 58.2 L171.1 72.7 L145.9 72.7 Z" fill="url(#gBlue)" stroke="#5a7fb8" stroke-width=".8"/>
<!-- save -->
<rect x="202.6" y="48.3" width="24.2" height="25" rx="2.5" fill="url(#gFl)" stroke="#2b2fa6" stroke-width="1.2"/>
<rect x="206" y="49.3" width="17.8" height="11.2" fill="#f4f6ff"/>
<rect x="208" y="63.3" width="12" height="9.7" fill="#e4e4ea"/>
<rect x="210.3" y="66" width="2" height="4.5" fill="#1d3fd0"/>
<!-- save as -->
<rect x="248.5" y="48" width="24.2" height="25" rx="2.5" fill="url(#gFl)" stroke="#2b2fa6" stroke-width="1.2"/>
<rect x="252" y="49.2" width="17.8" height="11.2" fill="#f4f6ff"/>
<rect x="254" y="63.2" width="12" height="9.7" fill="#e4e4ea"/>
<rect x="256.3" y="66" width="2" height="4.5" fill="#1d3fd0"/>
<path d="M258.5 66 L261 60.5 L272.5 48.5 L275.5 51.5 L264 63.5 Z" fill="#f5a623" stroke="#b0401a" stroke-width=".9"/>
<path d="M272.5 48.5 L275.5 51.5 L276 50 L274 48 Z" fill="#e04a3a"/>
<!-- svg logo -->
<rect x="305.3" y="57.8" width="23.7" height="14.8" rx="3" fill="#000"/>
<g stroke="#000" stroke-width="2.6" stroke-linecap="round"><line x1="317.2" y1="60.5" x2="310" y2="55.4"/><line x1="317.2" y1="60.5" x2="313.6" y2="52.5"/><line x1="317.2" y1="60.5" x2="317.2" y2="50.7"/><line x1="317.2" y1="60.5" x2="321.1" y2="52.5"/><line x1="317.2" y1="60.5" x2="324.3" y2="55.4"/></g>
<g fill="#000"><circle cx="310" cy="55.4" r="3"/><circle cx="313.6" cy="52.5" r="3"/><circle cx="317.2" cy="50.7" r="3"/><circle cx="321.1" cy="52.5" r="3"/><circle cx="324.3" cy="55.4" r="3"/></g>
<g stroke="#f9a828" stroke-width="1.4" stroke-linecap="round"><line x1="317.2" y1="59.5" x2="310" y2="55.4"/><line x1="317.2" y1="59.5" x2="313.6" y2="52.5"/><line x1="317.2" y1="59.5" x2="317.2" y2="50.7"/><line x1="317.2" y1="59.5" x2="321.1" y2="52.5"/><line x1="317.2" y1="59.5" x2="324.3" y2="55.4"/></g>
<g fill="#f9a828"><circle cx="310" cy="55.4" r="1.9"/><circle cx="313.6" cy="52.5" r="1.9"/><circle cx="317.2" cy="50.7" r="1.9"/><circle cx="321.1" cy="52.5" r="1.9"/><circle cx="324.3" cy="55.4" r="1.9"/></g>
<rect x="307" y="58.6" width="20.4" height="1.6" fill="#f9a828"/>
<text x="317.2" y="72" text-anchor="middle" font-family="Liberation Sans" font-weight="bold" font-size="14" fill="#fff" textLength="18.8" lengthAdjust="spacingAndGlyphs">SVG</text>
<!-- print preview -->
<linearGradient id="gPr" x1="0" y1="0" x2="0" y2="1"><stop offset="0" stop-color="#fbfbfb"/><stop offset=".6" stop-color="#e6e6e6"/><stop offset="1" stop-color="#c4c4c4"/></linearGradient>
<rect x="363.5" y="47.5" width="19" height="14" fill="#fdfdfd" stroke="#b5b5b5" stroke-width=".8"/>
<path d="M359.5 60.5 L386.5 60.5 L386.5 71 Q386.5 73.5 384 73.5 L362 73.5 Q359.5 73.5 359.5 71 Z" fill="url(#gPr)" stroke="#a5a5a5" stroke-width=".9"/>
<line x1="361" y1="67.5" x2="385" y2="67.5" stroke="#d0d0d0" stroke-width="1"/>
<line x1="373" y1="60" x2="380.5" y2="66.5" stroke="#7a7a7a" stroke-width="2.6" stroke-linecap="round"/>
<circle cx="368.3" cy="55.3" r="6" fill="url(#gMag)" stroke="#c2c2c2" stroke-width="1.5"/>
<!-- undo -->
<g id="undoI">
<path d="M422 57.4 A9 9 0 1 1 428.9 69.4" fill="none" stroke="#1c7e28" stroke-width="6.2"/>
<path d="M422 57.4 A9 9 0 1 1 428.9 69.4" fill="none" stroke="url(#gGreen)" stroke-width="4.6"/>
<path d="M428.9 69.4 L426 73.2 L431 71" fill="#1c7e28"/>
<path d="M413.6 52 L413.6 66.9 L426.4 66.9 Z" fill="#35a83f" stroke="#1c7e28" stroke-width=".9" stroke-linejoin="round"/>
</g>
<g transform="translate(902,0) scale(-1,1)" opacity=".55"><use href="#undoI"/></g>
<!-- eraser -->
<ellipse cx="530" cy="72" rx="12" ry="2" fill="#e0e0e0"/>
<path d="M518 67 L535 49 Q537 47 539 49 L542 52 Q543.5 54 542 55.5 L525 73.5 Z" fill="#d01818" stroke="#8a1010" stroke-width=".8"/>
<path d="M521.3 63.5 L538.3 45.8 L540.8 48.3 L523.8 66 Z" fill="#fff" opacity=".95" transform="translate(1.1,1.1)"/>
<path d="M518 67 L521.5 63.5 L529 70 L525 73.5 Z" fill="#f4f4f4" stroke="#777" stroke-width=".8"/>
<!-- scissors -->
<path d="M583.3 63.5 L587.8 45.8 L590.3 46.6 L587 63.5 Z" fill="#f2f2f2" stroke="#777" stroke-width=".8" stroke-linejoin="round"/>
<path d="M585 60.5 L599 52.3 L600.5 55.3 L587 63.2 Z" fill="#f2f2f2" stroke="#777" stroke-width=".8" stroke-linejoin="round"/>
<ellipse cx="578.3" cy="63" rx="5.4" ry="3.3" fill="none" stroke="#e02020" stroke-width="2.1" transform="rotate(-18 578.3 63)"/>
<ellipse cx="588.2" cy="70.3" rx="2.9" ry="5" fill="none" stroke="#e02020" stroke-width="2.1" transform="rotate(-12 588.2 70.3)"/>
<path d="M572 72.5 h6 M575 69.5 v6" stroke="#000" stroke-width="1.2"/>
<!-- copy -->
<path d="M617.5 45.5 L632 45.5 L635.5 49 L635.5 70 L617.5 70 Z" fill="#f2f2f2" stroke="#aaa" stroke-width=".8"/>
<path d="M625.5 51.5 L646.5 51.5 L646.5 72.5 L642.5 76.5 L625.5 76.5 Z" fill="#f8f8f8" stroke="#999" stroke-width=".9"/>
<g stroke="#c0c0c0" stroke-width=".9"><line x1="629" y1="57" x2="643" y2="57"/><line x1="629" y1="60" x2="643" y2="60"/><line x1="629" y1="63" x2="643" y2="63"/><line x1="629" y1="66" x2="640" y2="66"/></g>
<path d="M618 72.5 h6 M621 69.5 v6" stroke="#000" stroke-width="1.2"/>
<!-- paste -->
<rect x="664.5" y="48" width="26.5" height="28" rx="2" fill="#b8862e" stroke="#8a6420" stroke-width=".8"/>
<path d="M667 51 L688.5 51 L688.5 70 L684 74 L667 74 Z" fill="#f6f6f6"/>
<rect x="671" y="45" width="13" height="6" rx="2" fill="#a0a0a0" stroke="#777" stroke-width=".6"/>
<g stroke="#c8c8c8" stroke-width=".9"><line x1="670" y1="57" x2="685" y2="57"/><line x1="670" y1="60" x2="685" y2="60"/><line x1="670" y1="63" x2="685" y2="63"/><line x1="670" y1="66" x2="681" y2="66"/></g>
<path d="M684 74 L688.5 70 L684 70 Z" fill="#999"/>
<!-- pencil -->
<path d="M723 70.3 L724.3 65 L738.5 50.7 Q740.6 48.8 742.6 50.7 Q744.5 52.7 742.6 54.7 L728.3 69 Z" fill="#e0201a" stroke="#6a3a10" stroke-width=".7" stroke-linejoin="round"/>
<path d="M736.6 52.6 L740.7 56.7 L742 55.3 L737.9 51.2 Z" fill="#c8c8c8"/>
<path d="M723 70.3 L724.3 65 L728.3 69 Z" fill="#f2d4a8" stroke="#6a3a10" stroke-width=".5"/>
<path d="M723 70.3 L723.6 68 L725.3 69.7 Z" fill="#222"/>
<line x1="722" y1="71.4" x2="744" y2="71.4" stroke="#f00" stroke-width="1.1"/>
<!-- blue rect -->
<rect x="764.6" y="50.6" width="28.6" height="21.4" rx="1" fill="#000080" stroke="#151515" stroke-width="1.1"/>
<path d="M769 68.8 L789.5 54.3 L789.5 68.8 Z" fill="none" stroke="#f0f0ff" stroke-width="1.1" stroke-dasharray="2.3 1.2"/>
<!-- pressed circle btn -->
<rect x="804" y="40" width="43" height="43" rx="4" fill="#b9b9b9"/>
<circle cx="825" cy="60.8" r="12.3" fill="none" stroke="#000" stroke-width="2"/>
<line x1="811" y1="75" x2="839.5" y2="47" stroke="#0000f0" stroke-width="1.2"/>
<!-- grid btn -->
<rect x="861" y="40" width="43" height="43" rx="4" fill="#b9b9b9"/>
<g fill="#111">
<rect x="869.2" y="47.7" width="1.8" height="1.8"/><rect x="877.2" y="47.7" width="1.8" height="1.8"/><rect x="885.2" y="47.7" width="1.8" height="1.8"/><rect x="893.2" y="47.7" width="1.8" height="1.8"/>
<rect x="869.2" y="55.7" width="1.8" height="1.8"/><rect x="877.2" y="55.7" width="1.8" height="1.8"/><rect x="885.2" y="55.7" width="1.8" height="1.8"/><rect x="893.2" y="55.7" width="1.8" height="1.8"/>
<rect x="869.2" y="63.7" width="1.8" height="1.8"/><rect x="877.2" y="63.7" width="1.8" height="1.8"/><rect x="885.2" y="63.7" width="1.8" height="1.8"/><rect x="893.2" y="63.7" width="1.8" height="1.8"/>
<rect x="869.2" y="71.7" width="1.8" height="1.8"/><rect x="877.2" y="71.7" width="1.8" height="1.8"/><rect x="885.2" y="71.7" width="1.8" height="1.8"/><rect x="893.2" y="71.7" width="1.8" height="1.8"/>
</g>
<!-- zoom icons -->
<g id="zm">
<line x1="942" y1="64" x2="950.5" y2="72" stroke="#6a6a6a" stroke-width="3.6" stroke-linecap="round"/>
<circle cx="935" cy="57" r="11" fill="#ededed" stroke="#bdbdbd" stroke-width="1"/>
<circle cx="935" cy="57" r="9.2" fill="url(#gMag)" stroke="#4479c8" stroke-width=".6"/>
</g>
<path d="M935 51.5 v11 M929.5 57 h11" stroke="#fff" stroke-width="3.2"/>
<use href="#zm" x="46"/>
<path d="M975.5 57 h11" stroke="#fff" stroke-width="3.2"/>
<use href="#zm" x="92"/>
<rect x="1023.5" y="53.5" width="7" height="7" fill="#c4d6f0"/>
<path d="M1020.9 54.3 v-3.4 h3.4 M1029.7 50.9 h3.4 v3.4 M1033.1 59.7 v3.4 h-3.4 M1024.3 63.1 h-3.4 v-3.4" fill="none" stroke="#fff" stroke-width="1.7"/>
<use href="#zm" x="138"/>
<rect x="1069.5" y="53.5" width="7" height="7" fill="#c4d6f0"/>
<path d="M1066.9 54.3 v-3.4 h3.4 M1075.7 50.9 h3.4 v3.4 M1079.1 59.7 v3.4 h-3.4 M1070.3 63.1 h-3.4 v-3.4" fill="none" stroke="#e00" stroke-width="2.1"/>
<use href="#zm" x="184"/>
<path d="M1114 57 L1120 51.5 L1120 54.8 L1127 54.8 L1127 59.2 L1120 59.2 L1120 62.5 Z" fill="#fff"/>
<rect x="1153.5" y="45.5" width="27.5" height="18" fill="#fff" stroke="#7a9ad0" stroke-width="1"/>
<use href="#zm" x="232.5" y="2.3"/>
<use href="#zm" x="276"/>
<path d="M1211 45 L1214.5 49.5 L1212 49.5 L1212 55.8 L1218.5 55.8 L1218.5 53.3 L1223 57 L1218.5 60.7 L1218.5 58.2 L1212 58.2 L1212 64.5 L1214.5 64.5 L1211 69 L1207.5 64.5 L1210 64.5 L1210 58.2 L1203.5 58.2 L1203.5 60.7 L1199 57 L1203.5 53.3 L1203.5 55.8 L1210 55.8 L1210 49.5 L1207.5 49.5 Z" fill="#fff" stroke="#4f7fd0" stroke-width=".6"/>
<!-- toolbar 2 button -->
<rect x="15.3" y="88.3" width="42.7" height="30.5" rx="4.5" fill="url(#gBtn2)" stroke="#7c7c7c" stroke-width="1.7"/>
<path d="M36.5 94.5 v18 M27.5 103.5 h18" stroke="#000" stroke-width="5.6"/>
<path d="M36.5 95 v17 M28 103.5 h17" stroke="#e00" stroke-width="3.8"/>
</svg>

<svg class="a" style="left:0;top:122px" width="72" height="400" viewBox="0 122 72 400">
<defs>
<linearGradient id="gTB" x1="0" y1="0" x2="0" y2="1"><stop offset="0" stop-color="#fbfbfb"/><stop offset=".45" stop-color="#ececec"/><stop offset="1" stop-color="#f6f6f6"/></linearGradient>
<g id="tbx"><rect x=".5" y=".5" width="33" height="33" fill="url(#gTB)" stroke="#8f8f8f" stroke-width="1"/></g>
<path id="tri" d="M24.6 30.2 L29.2 25.6 L29.2 30.2 Z" fill="#000"/>
</defs>
<g fill="#a8a8a8"><rect x="8" y="131" width="2" height="2"/><rect x="14" y="131" width="2" height="2"/><rect x="20" y="131" width="2" height="2"/><rect x="26" y="131" width="2" height="2"/><rect x="32" y="131" width="2" height="2"/><rect x="38" y="131" width="2" height="2"/><rect x="44" y="131" width="2" height="2"/><rect x="50" y="131" width="2" height="2"/><rect x="56" y="131" width="2" height="2"/><rect x="62" y="131" width="2" height="2"/></g>
<use href="#tbx" x="2" y="137"/><use href="#tbx" x="37" y="137"/>
<use href="#tbx" x="2" y="172"/><use href="#tbx" x="37" y="172"/>
<use href="#tbx" x="2" y="207"/><use href="#tbx" x="37" y="207"/>
<use href="#tbx" x="2" y="242"/><use href="#tbx" x="37" y="242"/>
<use href="#tbx" x="2" y="277"/>
<use href="#tbx" x="2" y="321"/><use href="#tbx" x="37" y="321"/>
<use href="#tbx" x="2" y="356"/>
<use href="#tbx" x="2" y="399"/><use href="#tbx" x="37" y="399"/>
<use href="#tbx" x="2" y="434"/><use href="#tbx" x="37" y="434"/>
<use href="#tbx" x="2" y="477"/>
<g>
<use href="#tri" x="0" y="137"/><use href="#tri" x="35" y="137"/>
<use href="#tri" x="0" y="172"/><use href="#tri" x="35" y="172"/>
<use href="#tri" x="0" y="207"/><use href="#tri" x="35" y="207"/>
<use href="#tri" x="0" y="242"/><use href="#tri" x="35" y="242"/>
<use href="#tri" x="0" y="277"/><use href="#tri" x="35" y="321"/>
<use href="#tri" x="0" y="399"/><use href="#tri" x="35" y="434"/>
<use href="#tri" x="0" y="477"/>
</g>
<g fill="none" stroke="#222" stroke-width="1.1">
<path d="M8 146.5 h6 M11 143.5 v6 M22.5 155.5 h6 M25.5 152.5 v6 M8.5 162 h6 M11.5 159 v6"/>
<path d="M41.5 159.6 L64.7 149.1"/>
<path d="M7.8 198.2 Q9 181 27.3 178.8"/>
<circle cx="52.1" cy="188.7" r="10"/>
<ellipse cx="18.2" cy="224.3" rx="13.5" ry="5.8" transform="rotate(-45 18.2 224.3)"/>
<path d="M43 216 C40 224 46 235 52 226 C58 216 66 214 64 224 C62 232 55 228 52 222 C48 214 44 212 43 216 Z"/>
<path d="M15 255 C7 255 7 264 14 264 L28 264"/>
<path d="M41.5 253 L44 248.5 L49 248.5 L51.5 253 L49 257.5 L44 257.5 Z"/>
<path d="M58.5 250 L63 258 L54 258 Z"/>
<rect x="41.5" y="262" width="14" height="6"/>
</g>
<g>
<clipPath id="hc"><path d="M7.4 301.4 L7.4 293.2 L13.7 287.2 L28.3 287.2 L28.3 301.4 Z"/></clipPath>
<g clip-path="url(#hc)" stroke="#777" stroke-width=".8"><path d="M4 304 l16-16 M8 304 l16-16 M12 304 l16-16 M16 304 l16-16 M20 304 l16-16 M24 304 l16-16 M0 304 l16-16"/></g>
<path d="M7.4 301.4 L7.4 293.2 L13.7 287.2 L28.3 287.2 L28.3 301.4 Z" fill="none" stroke="#222" stroke-width="1.3" stroke-linejoin="round"/>
<circle cx="20.6" cy="294.4" r="3.2" fill="#f4f4f4" stroke="#222" stroke-width="1.1"/>
</g>
<text x="18.8" y="349" text-anchor="middle" font-family="Liberation Serif" font-size="26" fill="#000">A</text>
<path d="M42 330 v14 M63 330 v14 M42 333 h21" fill="none" stroke="#111" stroke-width="1.2"/>
<path d="M42 333 l3 -1.7 v3.4 Z M63 333 l-3 -1.7 v3.4 Z" fill="#111"/>
<rect x="8.5" y="363.5" width="21" height="17" fill="#fff" stroke="#222" stroke-width="1.2"/>
<path d="M11 378 L16 371 L19 374 L22 369 L27 378 Z" fill="#000"/>
<circle cx="24.5" cy="367" r="1.7" fill="#000"/>
<path d="M6 428 L6 411 L24 428 Z" fill="#fff" stroke="#111" stroke-width="1.2"/>
<path d="M9 425 L9 420 L14 425 Z" fill="none" stroke="#111" stroke-width=".9"/>
<path d="M12 405 L20 413" stroke="#e01010" stroke-width="3"/>
<path d="M26 428 L28.5 405 L31 428 M28.5 405 v-2" fill="none" stroke="#111" stroke-width="1.1"/>
<rect x="41.5" y="410.5" width="24" height="8" rx="1" fill="#fff" stroke="#333" stroke-width="1"/>
<path d="M44 411 v3 M47 411 v2 M50 411 v3 M53 411 v2 M56 411 v3 M59 411 v2 M62 411 v3" stroke="#444" stroke-width=".7"/>
<rect x="7.5" y="440.5" width="16" height="14" fill="#fdf4c4" stroke="#333" stroke-width="1"/>
<circle cx="18.5" cy="452" r="7" fill="#fdf4c4" stroke="#333" stroke-width="1"/>
<circle cx="7.5" cy="454" r="1.5" fill="#e01010"/>
<path d="M40 446 L60 437" stroke="#e01010" stroke-width="1.3"/>
<path d="M52 443 L52 456 L55 453 L57.5 458 L59.5 457 L57 452 L61 452 Z" fill="#fff" stroke="#555" stroke-width=".9"/>
<path d="M7 486 L19 481 L29 486 L29 498 L17 503 L7 498 Z M7 486 L17 491 L29 486 M17 491 L17 503" fill="none" stroke="#222" stroke-width="1.1"/>
</svg>

</body></html>
